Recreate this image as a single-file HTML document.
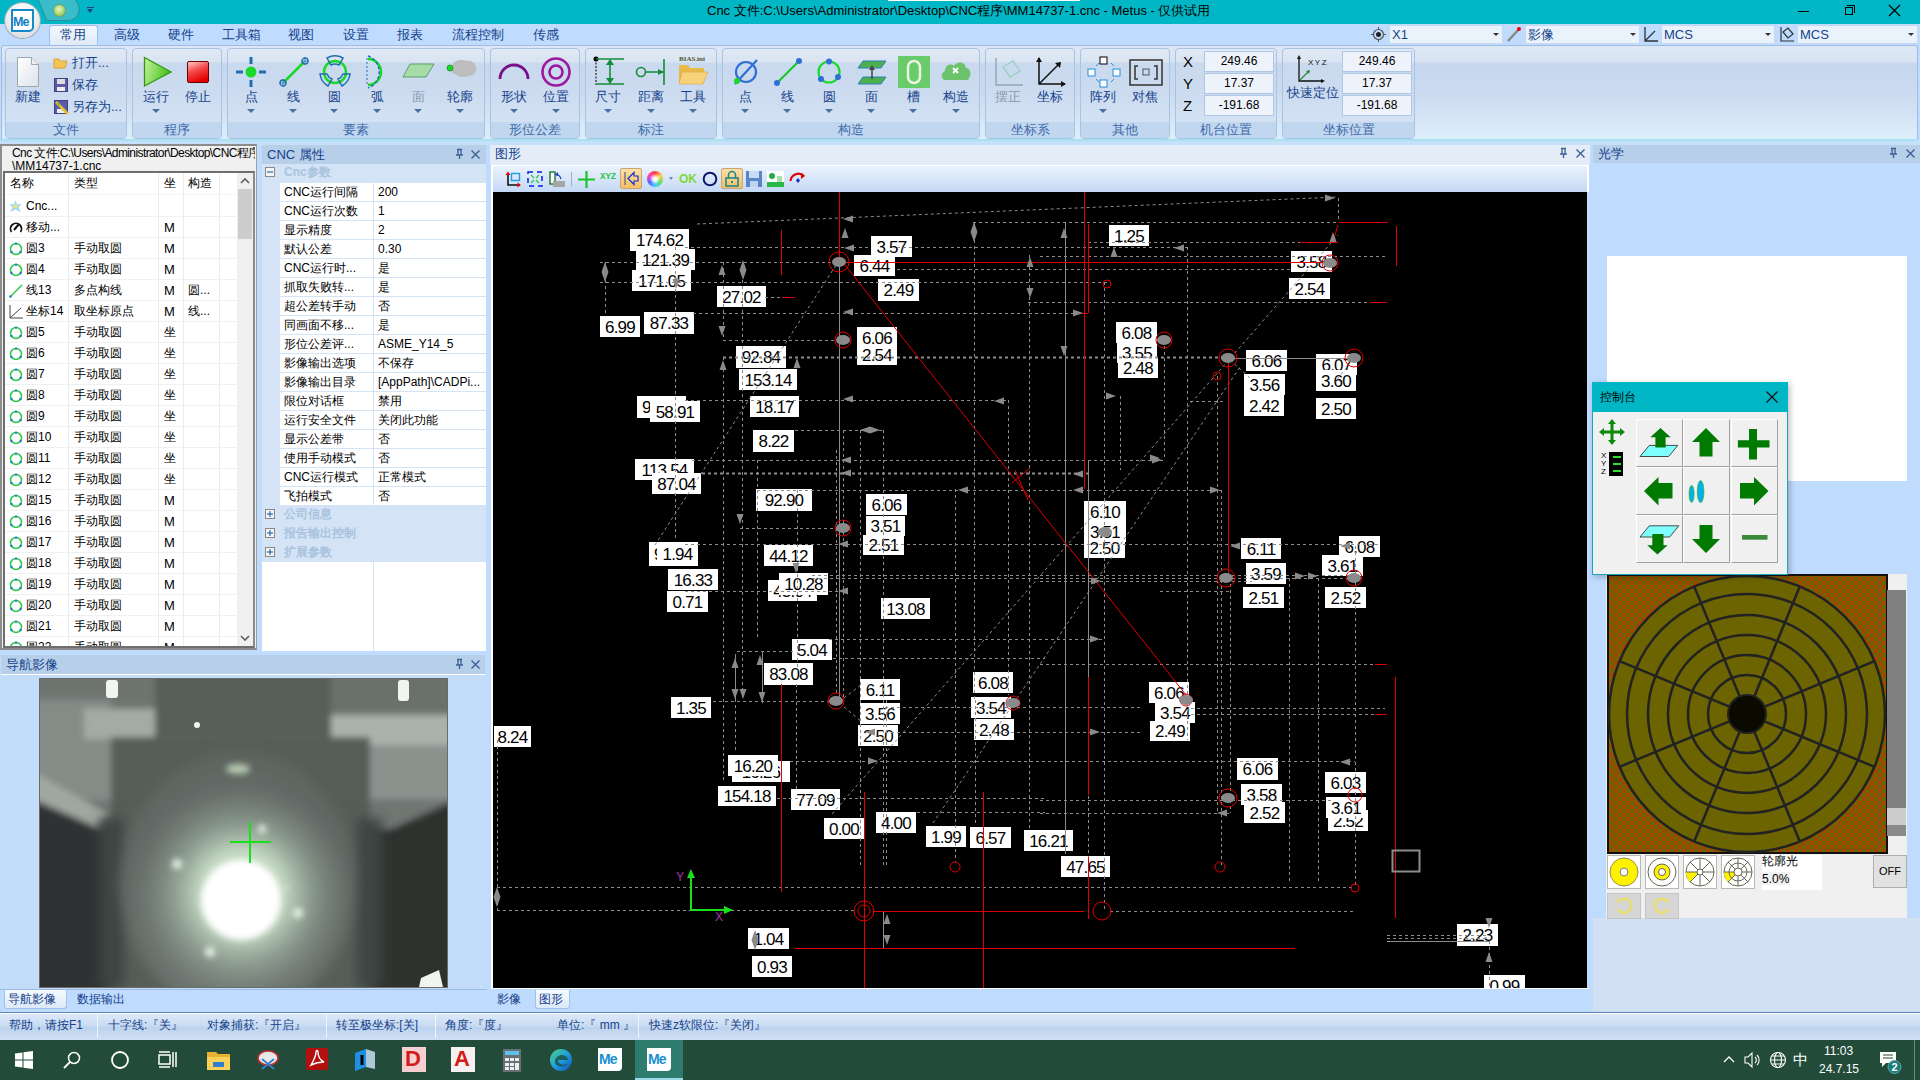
<!DOCTYPE html>
<html><head><meta charset="utf-8">
<style>
*{box-sizing:border-box;margin:0;padding:0}
html,body{width:1920px;height:1080px;overflow:hidden}
body{position:relative;background:#BFDBFE;font-family:"Liberation Sans",sans-serif;font-size:12px;color:#000}
.a{position:absolute}
.t{position:absolute;white-space:nowrap;line-height:1}
svg{position:absolute;overflow:visible}
.grp{position:absolute;top:48px;height:91px;border:1px solid #A9C3E3;border-radius:4px;background:linear-gradient(#E0E9F5 0,#DAE4F2 14%,#C9D9EE 16%,#CCDBEF 50%,#D6E6F6 100%)}
.grp .lbl{position:absolute;left:0;right:0;bottom:0;height:16px;background:#C1D6EF;text-align:center;color:#3E6AAA;font-size:13px;line-height:15px;border-radius:0 0 3px 3px}
.bt{position:absolute;font-size:13px;color:#15428B;white-space:nowrap;line-height:1;transform:translateX(-50%)}
.dd{position:absolute;width:0;height:0;border-left:4px solid transparent;border-right:4px solid transparent;border-top:4px solid #4B6FA6;transform:translateX(-50%)}
.ph{position:absolute;height:19px;background:#B8CFEA;color:#15428B;font-size:13px;line-height:19px;padding-left:5px;white-space:nowrap}
.lb{position:absolute;background:#fff;color:#000;font-size:17px;letter-spacing:-0.8px;line-height:21px;text-align:center;white-space:nowrap;overflow:hidden}
.row{position:absolute;height:21px;font-size:12px;line-height:21px;white-space:nowrap}
.pr{position:absolute;height:19px;font-size:12px;line-height:19px;white-space:nowrap}
</style></head>
<body>

<div class="a" style="left:0;top:0;width:1920px;height:24px;background:#01B7C5"></div>
<div class="a" style="left:888px;top:0;width:192px;height:1px;background:#fff"></div>
<div class="t" style="left:707px;top:4px;font-size:13px;color:#000;letter-spacing:0px">Cnc 文件:C:\Users\Administrator\Desktop\CNC程序\MM14737-1.cnc - Metus - 仅供试用</div>
<div class="a" style="left:1798px;top:11px;width:11px;height:1px;background:#000"></div>
<div class="a" style="left:1845px;top:7px;width:8px;height:8px;border:1px solid #000"></div><div class="a" style="left:1847px;top:5px;width:8px;height:8px;border-top:1px solid #000;border-right:1px solid #000"></div>
<svg style="left:1889px;top:5px" width="12" height="12"><path d="M0 0L11 11M11 0L0 11" stroke="#000" stroke-width="1.2"/></svg>
<svg style="left:36px;top:0" width="46" height="22"><path d="M2 -1C5 6 8 14 11 20.5H33A10.5 10.5 0 0 0 43 10C43 4 40 0 38 -1Z" fill="#3BBCC9" stroke="#2A8F9A" stroke-width="1"/></svg>
<div class="a" style="left:53px;top:4px;width:13px;height:13px;border-radius:50%;background:radial-gradient(circle at 45% 40%,#E4F5C6 0,#A8D66A 55%,#7FB04A 100%);border:1px solid #7d9a6a"></div>
<div class="a" style="left:87px;top:7px;width:7px;height:1px;background:#2A3F8A"></div><div class="a" style="left:87px;top:9px;width:0;height:0;border-left:3.5px solid transparent;border-right:3.5px solid transparent;border-top:4px solid #2A3F8A"></div>
<div class="a" style="left:0;top:24px;width:1920px;height:22px;background:#BFDBFE"></div>
<div class="a" style="left:49px;top:25px;width:49px;height:22px;background:linear-gradient(#F3F8FE,#DDE9F7);border:1px solid #9FC0E8;border-bottom:none;border-radius:3px 3px 0 0"></div>
<div class="t" style="left:73px;top:28px;font-size:13px;color:#15428B;transform:translateX(-50%)">常用</div>
<div class="t" style="left:127px;top:28px;font-size:13px;color:#15428B;transform:translateX(-50%)">高级</div>
<div class="t" style="left:181px;top:28px;font-size:13px;color:#15428B;transform:translateX(-50%)">硬件</div>
<div class="t" style="left:241px;top:28px;font-size:13px;color:#15428B;transform:translateX(-50%)">工具箱</div>
<div class="t" style="left:301px;top:28px;font-size:13px;color:#15428B;transform:translateX(-50%)">视图</div>
<div class="t" style="left:356px;top:28px;font-size:13px;color:#15428B;transform:translateX(-50%)">设置</div>
<div class="t" style="left:410px;top:28px;font-size:13px;color:#15428B;transform:translateX(-50%)">报表</div>
<div class="t" style="left:478px;top:28px;font-size:13px;color:#15428B;transform:translateX(-50%)">流程控制</div>
<div class="t" style="left:546px;top:28px;font-size:13px;color:#15428B;transform:translateX(-50%)">传感</div>
<div class="a" style="left:1389px;top:25px;width:114px;height:19px;background:#EAF2FC;border:1px solid #C6D9F0"></div><div class="t" style="left:1392px;top:28px;font-size:13px;color:#15428B">X1</div><div class="a" style="left:1493px;top:33px;width:0;height:0;border-left:3px solid transparent;border-right:3px solid transparent;border-top:3px solid #333"></div><svg style="left:1371px;top:27px" width="15" height="15"><circle cx="7.5" cy="7.5" r="5" fill="none" stroke="#555" stroke-width="1.2"/><circle cx="7.5" cy="7.5" r="2.5" fill="#222"/><path d="M7.5 0V3M7.5 12V15M0 7.5H3M12 7.5H15" stroke="#555"/></svg>
<div class="a" style="left:1525px;top:25px;width:115px;height:19px;background:#EAF2FC;border:1px solid #C6D9F0"></div><div class="t" style="left:1528px;top:28px;font-size:13px;color:#15428B">影像</div><div class="a" style="left:1630px;top:33px;width:0;height:0;border-left:3px solid transparent;border-right:3px solid transparent;border-top:3px solid #333"></div><svg style="left:1506px;top:26px" width="16" height="17"><path d="M2 15L13 3" stroke="#888" stroke-width="2.5"/><circle cx="13" cy="3" r="2" fill="#e00"/></svg>
<div class="a" style="left:1661px;top:25px;width:114px;height:19px;background:#EAF2FC;border:1px solid #C6D9F0"></div><div class="t" style="left:1664px;top:28px;font-size:13px;color:#15428B">MCS</div><div class="a" style="left:1765px;top:33px;width:0;height:0;border-left:3px solid transparent;border-right:3px solid transparent;border-top:3px solid #333"></div><svg style="left:1643px;top:26px" width="16" height="17"><path d="M2 1V15H15M2 15L12 5" stroke="#333" stroke-width="1.3" fill="none"/></svg>
<div class="a" style="left:1797px;top:25px;width:121px;height:19px;background:#EAF2FC;border:1px solid #C6D9F0"></div><div class="t" style="left:1800px;top:28px;font-size:13px;color:#15428B">MCS</div><div class="a" style="left:1908px;top:33px;width:0;height:0;border-left:3px solid transparent;border-right:3px solid transparent;border-top:3px solid #333"></div><svg style="left:1779px;top:26px" width="16" height="17"><path d="M2 1V15H15M4 6L9 2L14 8L9 12Z" stroke="#333" stroke-width="1.2" fill="none"/></svg>
<div class="a" style="left:5px;top:3px;width:35px;height:35px;border-radius:50%;background:radial-gradient(circle at 50% 35%,#ffffff 0,#f2f2f2 45%,#c9cfd6 100%);box-shadow:0 0 0 1px #9aa6b0"></div>
<div class="a" style="left:11px;top:9px;width:23px;height:23px;background:#fff;border:2px solid #1589C9;border-radius:1px 1px 5px 1px"></div>
<div class="t" style="left:13px;top:16px;font-size:12.5px;font-weight:bold;color:#1480C2;letter-spacing:-0.8px">Me</div>
<div class="a" style="left:1px;top:45px;width:1917px;height:96px;border:1px solid #9DBDE5;border-bottom:2px solid #A6E2F2;border-radius:3px;background:linear-gradient(#DEE8F5 0,#D8E3F2 17%,#C6D7EE 19%,#CBDAEF 50%,#DDEEFB 100%)"></div>
<div class="grp" style="left:5px;width:122px"><div class="lbl">文件</div></div>
<div class="grp" style="left:132px;width:90px"><div class="lbl">程序</div></div>
<div class="grp" style="left:227px;width:258px"><div class="lbl">要素</div></div>
<div class="grp" style="left:490px;width:90px"><div class="lbl">形位公差</div></div>
<div class="grp" style="left:585px;width:132px"><div class="lbl">标注</div></div>
<div class="grp" style="left:722px;width:258px"><div class="lbl">构造</div></div>
<div class="grp" style="left:985px;width:90px"><div class="lbl">坐标系</div></div>
<div class="grp" style="left:1080px;width:90px"><div class="lbl">其他</div></div>
<div class="grp" style="left:1175px;width:102px"><div class="lbl">机台位置</div></div>
<div class="grp" style="left:1282px;width:133px"><div class="lbl">坐标位置</div></div>
<svg style="left:17px;top:57px" width="22" height="30"><path d="M0.5 0.5H14.5L21.5 7.5V29.5H0.5Z" fill="url(#pg)" stroke="#9aa"/><path d="M14.5 0.5V7.5H21.5" fill="#eee" stroke="#9aa"/><defs><linearGradient id="pg" x1="0" y1="0" x2="1" y2="1"><stop offset="0" stop-color="#fff"/><stop offset="1" stop-color="#dde3ea"/></linearGradient></defs></svg>
<div class="bt" style="left:28px;top:90px;color:#15428B">新建</div>
<svg style="left:53px;top:56px" width="16" height="13"><path d="M1 3H6L7 5H14L12 12H1Z" fill="#F6C454" stroke="#D9A53A"/></svg>
<div class="t" style="left:72px;top:56px;font-size:13px;color:#15428B">打开...</div>
<svg style="left:54px;top:78px" width="14" height="14"><rect x="0.5" y="0.5" width="13" height="13" fill="#5B5BA8" stroke="#3f3f86"/><rect x="3" y="1" width="8" height="5" fill="#ddd"/><rect x="3" y="9" width="8" height="4" fill="#eee"/></svg>
<div class="t" style="left:72px;top:78px;font-size:13px;color:#15428B">保存</div>
<svg style="left:54px;top:100px" width="15" height="15"><rect x="0.5" y="0.5" width="13" height="13" fill="#5B5BA8" stroke="#3f3f86"/><rect x="3" y="9" width="8" height="4" fill="#eee"/><path d="M2 2L14 14" stroke="#E8C02A" stroke-width="2.5"/><path d="M3 3L6 6" stroke="#3a3"/></svg>
<div class="t" style="left:72px;top:100px;font-size:13px;color:#15428B">另存为...</div>
<svg style="left:143px;top:56px" width="30" height="32"><defs><linearGradient id="gr" x1="0" y1="0" x2="1" y2="0.3"><stop offset="0" stop-color="#C9F2A6"/><stop offset="1" stop-color="#45C21A"/></linearGradient></defs><path d="M1.5 1.5L28 16L1.5 30Z" fill="url(#gr)" stroke="#2E9A10" stroke-width="1.3"/></svg>
<div class="bt" style="left:156px;top:90px;color:#15428B">运行</div><div class="dd" style="left:156px;top:109px"></div>
<svg style="left:187px;top:61px" width="23" height="23"><defs><linearGradient id="rd" x1="0" y1="0" x2="0.4" y2="1"><stop offset="0" stop-color="#FFD2D2"/><stop offset="0.5" stop-color="#F24A4A"/><stop offset="1" stop-color="#E50000"/></linearGradient></defs><rect x="0.5" y="0.5" width="21" height="21" rx="1.5" fill="url(#rd)" stroke="#6a0000"/></svg>
<div class="bt" style="left:198px;top:90px;color:#15428B">停止</div>
<svg style="left:235px;top:56px" width="32" height="32"><circle cx="16" cy="16" r="5.5" fill="#19D92A"/><path d="M16 1V8M16 24V31M1 16H8M24 16H31" stroke="#1F6FB0" stroke-width="3"/></svg>
<div class="bt" style="left:251px;top:90px;color:#15428B">点</div><div class="dd" style="left:251px;top:109px"></div>
<svg style="left:279px;top:57px" width="30" height="30"><path d="M5 25L25 5" stroke="#19D92A" stroke-width="2.5"/><circle cx="4" cy="26" r="3" fill="none" stroke="#1F6FB0" stroke-width="1.3"/><circle cx="26" cy="4" r="3" fill="none" stroke="#1F6FB0" stroke-width="1.3"/><path d="M4 22V30M0 26H8M26 0V8M22 4H30" stroke="#1F6FB0" stroke-width="0.8"/></svg>
<div class="bt" style="left:293px;top:90px;color:#15428B">线</div><div class="dd" style="left:293px;top:109px"></div>
<svg style="left:318px;top:55px" width="34" height="34"><circle cx="17" cy="17" r="11" fill="none" stroke="#19D92A" stroke-width="2.5"/><path d="M9 3A16 16 0 0 1 25 3L21 10A9 9 0 0 0 13 10Z M2 19A16 16 0 0 0 10 31L14 24A9 9 0 0 1 9 19Z M32 19A16 16 0 0 1 24 31L20 24A9 9 0 0 0 25 19Z" fill="none" stroke="#1F6FB0" stroke-width="1.5"/></svg>
<div class="bt" style="left:334px;top:90px;color:#15428B">圆</div><div class="dd" style="left:334px;top:109px"></div>
<svg style="left:366px;top:56px" width="22" height="32"><path d="M2 3A13 13 0 0 1 2 29" fill="none" stroke="#19D92A" stroke-width="2.5"/><path d="M2 0A17 17 0 0 1 2 32" fill="none" stroke="#1F6FB0" stroke-width="1.5" stroke-dasharray="3 2"/><path d="M1 2V30" stroke="#1F6FB0" stroke-width="1" stroke-dasharray="2 2"/></svg>
<div class="bt" style="left:377px;top:90px;color:#15428B">弧</div><div class="dd" style="left:377px;top:109px"></div>
<svg style="left:402px;top:63px" width="33" height="15"><path d="M8 1H32L24 14H1Z" fill="#A6DDA6" stroke="#5F9F6F"/></svg>
<div class="bt" style="left:418px;top:90px;color:#8A9AB0">面</div><div class="dd" style="left:418px;top:109px"></div>
<svg style="left:445px;top:59px" width="32" height="20"><path d="M8 5C10 1 18 0 22 2C27 1 31 5 31 9C32 13 29 17 24 17C19 19 13 18 10 15C6 14 4 10 8 5Z" fill="#BDBDBD"/><circle cx="5" cy="9" r="3" fill="#19D92A" stroke="#0a8a1a" stroke-width="0.7"/></svg>
<div class="bt" style="left:460px;top:90px;color:#15428B">轮廓</div><div class="dd" style="left:460px;top:109px"></div>
<svg style="left:498px;top:60px" width="32" height="20"><path d="M2 19A14 14 0 0 1 30 19" fill="none" stroke="#7A0F8A" stroke-width="2.8"/></svg>
<div class="bt" style="left:514px;top:90px;color:#15428B">形状</div><div class="dd" style="left:514px;top:109px"></div>
<svg style="left:540px;top:56px" width="32" height="32"><circle cx="16" cy="16" r="13.5" fill="none" stroke="#9A199E" stroke-width="2.6"/><circle cx="16" cy="16" r="6.5" fill="none" stroke="#9A199E" stroke-width="2.6"/></svg>
<div class="bt" style="left:556px;top:90px;color:#15428B">位置</div><div class="dd" style="left:556px;top:109px"></div>
<svg style="left:592px;top:55px" width="34" height="34"><circle cx="4" cy="4" r="2.5" fill="#000"/><path d="M4 4V30" stroke="#000" stroke-dasharray="2 1.5"/><path d="M4 4H32M4 29H32M18 5V28" stroke="#148C3A" stroke-width="1.6"/><path d="M14 10L18 4L22 10ZM14 23L18 29L22 23Z" fill="#148C3A"/></svg>
<div class="bt" style="left:608px;top:90px;color:#15428B">尺寸</div><div class="dd" style="left:608px;top:109px"></div>
<svg style="left:636px;top:57px" width="32" height="30"><circle cx="5" cy="15" r="4.5" fill="none" stroke="#148C3A" stroke-width="1.6"/><path d="M10 15H28M28 2V28" stroke="#148C3A" stroke-width="1.6"/><path d="M22 12L28 15L22 18Z" fill="#148C3A"/></svg>
<div class="bt" style="left:651px;top:90px;color:#15428B">距离</div><div class="dd" style="left:651px;top:109px"></div>
<div class="t" style="left:679px;top:56px;font-size:7px;font-weight:bold;color:#4a5a2a;font-family:'Liberation Serif',serif">BIAS.ini</div>
<svg style="left:678px;top:63px" width="30" height="22"><path d="M1 2H10L12 5H26V20H1Z" fill="#E9B94A"/><path d="M4 9H30L25 21H1Z" fill="#F7D27A" stroke="#D9A53A" stroke-width="0.6"/></svg>
<div class="bt" style="left:693px;top:90px;color:#15428B">工具</div><div class="dd" style="left:693px;top:109px"></div>
<svg style="left:731px;top:57px" width="30" height="30"><circle cx="15" cy="15" r="10" fill="none" stroke="#2F6FD6" stroke-width="2.2"/><path d="M4 27L26 3" stroke="#2F6FD6" stroke-width="2.2"/><circle cx="6" cy="24" r="3" fill="#19D92A"/></svg>
<div class="bt" style="left:745px;top:90px;color:#15428B">点</div><div class="dd" style="left:745px;top:109px"></div>
<svg style="left:773px;top:57px" width="30" height="30"><path d="M4 26L26 4" stroke="#19C92A" stroke-width="2.2"/><circle cx="4" cy="26" r="3" fill="#2F6FD6"/><circle cx="26" cy="4" r="3" fill="#2F6FD6"/></svg>
<div class="bt" style="left:787px;top:90px;color:#15428B">线</div><div class="dd" style="left:787px;top:109px"></div>
<svg style="left:814px;top:57px" width="30" height="30"><circle cx="15" cy="15" r="10.5" fill="none" stroke="#19D92A" stroke-width="2.2"/><circle cx="15" cy="4.5" r="3" fill="#2F6FD6"/><circle cx="24" cy="20" r="3" fill="#2F6FD6"/><circle cx="7" cy="22" r="3" fill="#2F6FD6"/></svg>
<div class="bt" style="left:829px;top:90px;color:#15428B">圆</div><div class="dd" style="left:829px;top:109px"></div>
<svg style="left:856px;top:59px" width="32" height="28"><path d="M7 2H30L25 9H2Z" fill="#4CB04C" stroke="#2E7FBF"/><path d="M7 18H30L25 25H2Z" fill="#4CB04C" stroke="#2E7FBF"/><path d="M16 8V20" stroke="#444" stroke-width="1.5"/><path d="M13 11L16 6L19 11Z" fill="#444"/></svg>
<div class="bt" style="left:871px;top:90px;color:#15428B">面</div><div class="dd" style="left:871px;top:109px"></div>
<div class="a" style="left:898px;top:56px;width:32px;height:32px;background:#6ACB6A"></div><svg style="left:898px;top:56px" width="32" height="32"><rect x="10" y="5" width="12" height="22" rx="6" fill="none" stroke="#E6F5E6" stroke-width="2.5"/></svg>
<div class="bt" style="left:913px;top:90px;color:#15428B">槽</div><div class="dd" style="left:913px;top:109px"></div>
<svg style="left:940px;top:60px" width="32" height="22"><path d="M6 20C1 20 0 13 5 11C5 5 11 3 14 6C16 1 25 1 26 8C31 8 32 15 28 20Z" fill="#6CC36C"/><path d="M13 8L18 13M18 8L13 13" stroke="#fff" stroke-width="1.8"/></svg>
<div class="bt" style="left:956px;top:90px;color:#15428B">构造</div><div class="dd" style="left:956px;top:109px"></div>
<svg style="left:993px;top:57px" width="32" height="30"><path d="M3 1V28H30" stroke="#8FA5B8" stroke-width="1.4" fill="none"/><path d="M10 10L20 4L27 14L17 20Z" fill="none" stroke="#9FCFC0" stroke-width="1.4"/></svg>
<div class="bt" style="left:1008px;top:90px;color:#8A9AB0">摆正</div>
<svg style="left:1036px;top:57px" width="30" height="30"><path d="M3 1V27H29M3 27L24 6" stroke="#111" stroke-width="1.5" fill="none"/><path d="M0 5L3 0L6 5ZM25 24L30 27L25 30ZM19 6L25 5L24 11Z" fill="#111"/></svg>
<div class="bt" style="left:1050px;top:90px;color:#15428B">坐标</div>
<svg style="left:1087px;top:56px" width="34" height="32"><rect x="13" y="1" width="7" height="7" fill="#fff" stroke="#000"/><rect x="1" y="13" width="7" height="7" fill="#fff" stroke="#1E90E0"/><rect x="26" y="13" width="7" height="7" fill="#fff" stroke="#1E90E0"/><rect x="13" y="24" width="7" height="7" fill="#fff" stroke="#1E90E0"/><path d="M9 10L12 7M24 7L27 10M9 23L12 26M27 23L24 26" stroke="#1E90E0"/></svg>
<div class="bt" style="left:1103px;top:90px;color:#15428B">阵列</div><div class="dd" style="left:1103px;top:109px"></div>
<svg style="left:1129px;top:59px" width="34" height="27"><rect x="1" y="1" width="32" height="25" fill="none" stroke="#333" stroke-width="1.5"/><path d="M9 7H6V20H9M25 7H28V20H25" stroke="#333" stroke-width="1.5" fill="none"/><rect x="14" y="10" width="6" height="6" fill="none" stroke="#555"/></svg>
<div class="bt" style="left:1145px;top:90px;color:#15428B">对焦</div>
<div class="t" style="left:1183px;top:54px;font-size:15px;color:#000">X</div>
<div class="a" style="left:1204px;top:51px;width:70px;height:21px;background:#EEF3FB;border:1px solid #B0C7E4;font-size:12px;line-height:19px;text-align:center">249.46</div>
<div class="a" style="left:1342px;top:51px;width:70px;height:21px;background:#EEF3FB;border:1px solid #B0C7E4;font-size:12px;line-height:19px;text-align:center">249.46</div>
<div class="t" style="left:1183px;top:76px;font-size:15px;color:#000">Y</div>
<div class="a" style="left:1204px;top:73px;width:70px;height:21px;background:#EEF3FB;border:1px solid #B0C7E4;font-size:12px;line-height:19px;text-align:center">17.37</div>
<div class="a" style="left:1342px;top:73px;width:70px;height:21px;background:#EEF3FB;border:1px solid #B0C7E4;font-size:12px;line-height:19px;text-align:center">17.37</div>
<div class="t" style="left:1183px;top:98px;font-size:15px;color:#000">Z</div>
<div class="a" style="left:1204px;top:95px;width:70px;height:21px;background:#EEF3FB;border:1px solid #B0C7E4;font-size:12px;line-height:19px;text-align:center">-191.68</div>
<div class="a" style="left:1342px;top:95px;width:70px;height:21px;background:#EEF3FB;border:1px solid #B0C7E4;font-size:12px;line-height:19px;text-align:center">-191.68</div>
<svg style="left:1297px;top:55px" width="30" height="28"><path d="M2 2V26H26" stroke="#111" stroke-width="1.3" fill="none"/><path d="M0 4L2 0L4 4ZM24 24L28 26L24 28Z" fill="#111"/><path d="M3 25L12 16" stroke="#2A8A3A" stroke-width="1.3"/><path d="M9 16L13 15L12 19Z" fill="#2A8A3A"/></svg>
<div class="t" style="left:1308px;top:59px;font-size:8px;color:#111;letter-spacing:1.5px">XYZ</div>
<div class="t" style="left:1287px;top:86px;font-size:13px;color:#15428B">快速定位</div>
<div class="a" style="left:0;top:141px;width:1920px;height:4px;background:#C5E0F8"></div>
<div class="a" style="left:0;top:144px;width:257px;height:506px;background:#F0F0F0;border:2px solid #8C8C8C;border-right:1px solid #A0A0A0"></div>
<div class="t" style="left:12px;top:147px;font-size:12px;width:243px;overflow:hidden;letter-spacing:-0.6px">Cnc 文件:C:\Users\Administrator\Desktop\CNC程序</div>
<div class="t" style="left:12px;top:160px;font-size:12px">\MM14737-1.cnc</div>
<div class="a" style="left:3px;top:171px;width:252px;height:477px;background:#fff;border:2px solid #6E6E6E;border-right:2px solid #8A8A8A"></div>
<div class="a" style="left:68px;top:173px;width:1px;height:473px;background:#EBEBEB"></div>
<div class="a" style="left:158px;top:173px;width:1px;height:473px;background:#EBEBEB"></div>
<div class="a" style="left:183px;top:173px;width:1px;height:473px;background:#EBEBEB"></div>
<div class="a" style="left:219px;top:173px;width:1px;height:473px;background:#EBEBEB"></div>
<div class="a" style="left:5px;top:194px;width:232px;height:1px;background:#F4F4F4"></div>
<div class="t" style="left:10px;top:177px;font-size:12px">名称</div>
<div class="t" style="left:74px;top:177px;font-size:12px">类型</div>
<div class="t" style="left:164px;top:177px;font-size:12px">坐</div>
<div class="t" style="left:188px;top:177px;font-size:12px">构造</div>
<div class="a" style="left:237px;top:173px;width:16px;height:473px;background:#F0F0F0"></div>
<div class="a" style="left:238px;top:189px;width:14px;height:50px;background:#CDCDCD"></div>
<svg style="left:240px;top:177px" width="10" height="7"><path d="M1 6L5 2L9 6" stroke="#606060" stroke-width="1.6" fill="none"/></svg>
<svg style="left:240px;top:635px" width="10" height="7"><path d="M1 1L5 5L9 1" stroke="#606060" stroke-width="1.6" fill="none"/></svg>
<div class="a" style="left:0;top:0;width:237px;height:646px;overflow:hidden">
<div class="a" style="left:5px;top:216px;width:232px;height:1px;background:#F0F0F0"></div>
<svg style="left:9px;top:200px" width="13" height="13"><path d="M6.5 0L8 4.5L12.5 4L9.5 7.5L12 12L6.5 9.5L1 12L3.5 7.5L0.5 4L5 4.5Z" fill="#9FD8F0"/><circle cx="6.5" cy="6.5" r="2" fill="#F2E27A"/></svg>
<div class="row" style="left:26px;top:196px;width:70px;overflow:hidden;clip-path:inset(0 0 0px 0)">Cnc...</div>
<div class="a" style="left:5px;top:237px;width:232px;height:1px;background:#F0F0F0"></div>
<svg style="left:9px;top:221px" width="14" height="13"><path d="M2.5 11A5.5 5.5 0 1 1 11.5 11" fill="none" stroke="#111" stroke-width="1.8"/><path d="M5 9L10 3" stroke="#111" stroke-width="2"/></svg>
<div class="row" style="left:26px;top:217px;width:70px;overflow:hidden;clip-path:inset(0 0 0px 0)">移动...</div>
<div class="row" style="left:164px;top:217px;font-size:13px;clip-path:inset(0 0 0px 0)">M</div>
<div class="a" style="left:5px;top:258px;width:232px;height:1px;background:#F0F0F0"></div>
<svg style="left:9px;top:242px" width="14" height="14"><circle cx="7" cy="7" r="5.5" fill="none" stroke="#2BC84A" stroke-width="1.5"/><circle cx="7" cy="1.6" r="1.2" fill="#1E7FC8"/><circle cx="2.4" cy="10" r="1.2" fill="#1E7FC8"/><circle cx="11.6" cy="10" r="1.2" fill="#1E7FC8"/></svg>
<div class="row" style="left:26px;top:238px;width:70px;overflow:hidden;clip-path:inset(0 0 0px 0)">圆3</div>
<div class="row" style="left:74px;top:238px;clip-path:inset(0 0 0px 0)">手动取圆</div>
<div class="row" style="left:164px;top:238px;font-size:13px;clip-path:inset(0 0 0px 0)">M</div>
<div class="a" style="left:5px;top:279px;width:232px;height:1px;background:#F0F0F0"></div>
<svg style="left:9px;top:263px" width="14" height="14"><circle cx="7" cy="7" r="5.5" fill="none" stroke="#2BC84A" stroke-width="1.5"/><circle cx="7" cy="1.6" r="1.2" fill="#1E7FC8"/><circle cx="2.4" cy="10" r="1.2" fill="#1E7FC8"/><circle cx="11.6" cy="10" r="1.2" fill="#1E7FC8"/></svg>
<div class="row" style="left:26px;top:259px;width:70px;overflow:hidden;clip-path:inset(0 0 0px 0)">圆4</div>
<div class="row" style="left:74px;top:259px;clip-path:inset(0 0 0px 0)">手动取圆</div>
<div class="row" style="left:164px;top:259px;font-size:13px;clip-path:inset(0 0 0px 0)">M</div>
<div class="a" style="left:5px;top:300px;width:232px;height:1px;background:#F0F0F0"></div>
<svg style="left:9px;top:284px" width="14" height="14"><path d="M1 13L13 1" stroke="#2BC84A" stroke-width="1.5"/><circle cx="1.5" cy="12.5" r="1.3" fill="#1E7FC8"/></svg>
<div class="row" style="left:26px;top:280px;width:70px;overflow:hidden;clip-path:inset(0 0 0px 0)">线13</div>
<div class="row" style="left:74px;top:280px;clip-path:inset(0 0 0px 0)">多点构线</div>
<div class="row" style="left:164px;top:280px;font-size:13px;clip-path:inset(0 0 0px 0)">M</div>
<div class="row" style="left:188px;top:280px">圆...</div>
<div class="a" style="left:5px;top:321px;width:232px;height:1px;background:#F0F0F0"></div>
<svg style="left:9px;top:305px" width="14" height="14"><path d="M1 0V13H14M1 13L12 3" stroke="#444" stroke-width="1" fill="none"/></svg>
<div class="row" style="left:26px;top:301px;width:70px;overflow:hidden;clip-path:inset(0 0 0px 0)">坐标14</div>
<div class="row" style="left:74px;top:301px;clip-path:inset(0 0 0px 0)">取坐标原点</div>
<div class="row" style="left:164px;top:301px;font-size:13px;clip-path:inset(0 0 0px 0)">M</div>
<div class="row" style="left:188px;top:301px">线...</div>
<div class="a" style="left:5px;top:342px;width:232px;height:1px;background:#F0F0F0"></div>
<svg style="left:9px;top:326px" width="14" height="14"><circle cx="7" cy="7" r="5.5" fill="none" stroke="#2BC84A" stroke-width="1.5"/><circle cx="7" cy="1.6" r="1.2" fill="#1E7FC8"/><circle cx="2.4" cy="10" r="1.2" fill="#1E7FC8"/><circle cx="11.6" cy="10" r="1.2" fill="#1E7FC8"/></svg>
<div class="row" style="left:26px;top:322px;width:70px;overflow:hidden;clip-path:inset(0 0 0px 0)">圆5</div>
<div class="row" style="left:74px;top:322px;clip-path:inset(0 0 0px 0)">手动取圆</div>
<div class="row" style="left:164px;top:322px;font-size:12px;clip-path:inset(0 0 0px 0)">坐</div>
<div class="a" style="left:5px;top:363px;width:232px;height:1px;background:#F0F0F0"></div>
<svg style="left:9px;top:347px" width="14" height="14"><circle cx="7" cy="7" r="5.5" fill="none" stroke="#2BC84A" stroke-width="1.5"/><circle cx="7" cy="1.6" r="1.2" fill="#1E7FC8"/><circle cx="2.4" cy="10" r="1.2" fill="#1E7FC8"/><circle cx="11.6" cy="10" r="1.2" fill="#1E7FC8"/></svg>
<div class="row" style="left:26px;top:343px;width:70px;overflow:hidden;clip-path:inset(0 0 0px 0)">圆6</div>
<div class="row" style="left:74px;top:343px;clip-path:inset(0 0 0px 0)">手动取圆</div>
<div class="row" style="left:164px;top:343px;font-size:12px;clip-path:inset(0 0 0px 0)">坐</div>
<div class="a" style="left:5px;top:384px;width:232px;height:1px;background:#F0F0F0"></div>
<svg style="left:9px;top:368px" width="14" height="14"><circle cx="7" cy="7" r="5.5" fill="none" stroke="#2BC84A" stroke-width="1.5"/><circle cx="7" cy="1.6" r="1.2" fill="#1E7FC8"/><circle cx="2.4" cy="10" r="1.2" fill="#1E7FC8"/><circle cx="11.6" cy="10" r="1.2" fill="#1E7FC8"/></svg>
<div class="row" style="left:26px;top:364px;width:70px;overflow:hidden;clip-path:inset(0 0 0px 0)">圆7</div>
<div class="row" style="left:74px;top:364px;clip-path:inset(0 0 0px 0)">手动取圆</div>
<div class="row" style="left:164px;top:364px;font-size:12px;clip-path:inset(0 0 0px 0)">坐</div>
<div class="a" style="left:5px;top:405px;width:232px;height:1px;background:#F0F0F0"></div>
<svg style="left:9px;top:389px" width="14" height="14"><circle cx="7" cy="7" r="5.5" fill="none" stroke="#2BC84A" stroke-width="1.5"/><circle cx="7" cy="1.6" r="1.2" fill="#1E7FC8"/><circle cx="2.4" cy="10" r="1.2" fill="#1E7FC8"/><circle cx="11.6" cy="10" r="1.2" fill="#1E7FC8"/></svg>
<div class="row" style="left:26px;top:385px;width:70px;overflow:hidden;clip-path:inset(0 0 0px 0)">圆8</div>
<div class="row" style="left:74px;top:385px;clip-path:inset(0 0 0px 0)">手动取圆</div>
<div class="row" style="left:164px;top:385px;font-size:12px;clip-path:inset(0 0 0px 0)">坐</div>
<div class="a" style="left:5px;top:426px;width:232px;height:1px;background:#F0F0F0"></div>
<svg style="left:9px;top:410px" width="14" height="14"><circle cx="7" cy="7" r="5.5" fill="none" stroke="#2BC84A" stroke-width="1.5"/><circle cx="7" cy="1.6" r="1.2" fill="#1E7FC8"/><circle cx="2.4" cy="10" r="1.2" fill="#1E7FC8"/><circle cx="11.6" cy="10" r="1.2" fill="#1E7FC8"/></svg>
<div class="row" style="left:26px;top:406px;width:70px;overflow:hidden;clip-path:inset(0 0 0px 0)">圆9</div>
<div class="row" style="left:74px;top:406px;clip-path:inset(0 0 0px 0)">手动取圆</div>
<div class="row" style="left:164px;top:406px;font-size:12px;clip-path:inset(0 0 0px 0)">坐</div>
<div class="a" style="left:5px;top:447px;width:232px;height:1px;background:#F0F0F0"></div>
<svg style="left:9px;top:431px" width="14" height="14"><circle cx="7" cy="7" r="5.5" fill="none" stroke="#2BC84A" stroke-width="1.5"/><circle cx="7" cy="1.6" r="1.2" fill="#1E7FC8"/><circle cx="2.4" cy="10" r="1.2" fill="#1E7FC8"/><circle cx="11.6" cy="10" r="1.2" fill="#1E7FC8"/></svg>
<div class="row" style="left:26px;top:427px;width:70px;overflow:hidden;clip-path:inset(0 0 0px 0)">圆10</div>
<div class="row" style="left:74px;top:427px;clip-path:inset(0 0 0px 0)">手动取圆</div>
<div class="row" style="left:164px;top:427px;font-size:12px;clip-path:inset(0 0 0px 0)">坐</div>
<div class="a" style="left:5px;top:468px;width:232px;height:1px;background:#F0F0F0"></div>
<svg style="left:9px;top:452px" width="14" height="14"><circle cx="7" cy="7" r="5.5" fill="none" stroke="#2BC84A" stroke-width="1.5"/><circle cx="7" cy="1.6" r="1.2" fill="#1E7FC8"/><circle cx="2.4" cy="10" r="1.2" fill="#1E7FC8"/><circle cx="11.6" cy="10" r="1.2" fill="#1E7FC8"/></svg>
<div class="row" style="left:26px;top:448px;width:70px;overflow:hidden;clip-path:inset(0 0 0px 0)">圆11</div>
<div class="row" style="left:74px;top:448px;clip-path:inset(0 0 0px 0)">手动取圆</div>
<div class="row" style="left:164px;top:448px;font-size:12px;clip-path:inset(0 0 0px 0)">坐</div>
<div class="a" style="left:5px;top:489px;width:232px;height:1px;background:#F0F0F0"></div>
<svg style="left:9px;top:473px" width="14" height="14"><circle cx="7" cy="7" r="5.5" fill="none" stroke="#2BC84A" stroke-width="1.5"/><circle cx="7" cy="1.6" r="1.2" fill="#1E7FC8"/><circle cx="2.4" cy="10" r="1.2" fill="#1E7FC8"/><circle cx="11.6" cy="10" r="1.2" fill="#1E7FC8"/></svg>
<div class="row" style="left:26px;top:469px;width:70px;overflow:hidden;clip-path:inset(0 0 0px 0)">圆12</div>
<div class="row" style="left:74px;top:469px;clip-path:inset(0 0 0px 0)">手动取圆</div>
<div class="row" style="left:164px;top:469px;font-size:12px;clip-path:inset(0 0 0px 0)">坐</div>
<div class="a" style="left:5px;top:510px;width:232px;height:1px;background:#F0F0F0"></div>
<svg style="left:9px;top:494px" width="14" height="14"><circle cx="7" cy="7" r="5.5" fill="none" stroke="#2BC84A" stroke-width="1.5"/><circle cx="7" cy="1.6" r="1.2" fill="#1E7FC8"/><circle cx="2.4" cy="10" r="1.2" fill="#1E7FC8"/><circle cx="11.6" cy="10" r="1.2" fill="#1E7FC8"/></svg>
<div class="row" style="left:26px;top:490px;width:70px;overflow:hidden;clip-path:inset(0 0 0px 0)">圆15</div>
<div class="row" style="left:74px;top:490px;clip-path:inset(0 0 0px 0)">手动取圆</div>
<div class="row" style="left:164px;top:490px;font-size:13px;clip-path:inset(0 0 0px 0)">M</div>
<div class="a" style="left:5px;top:531px;width:232px;height:1px;background:#F0F0F0"></div>
<svg style="left:9px;top:515px" width="14" height="14"><circle cx="7" cy="7" r="5.5" fill="none" stroke="#2BC84A" stroke-width="1.5"/><circle cx="7" cy="1.6" r="1.2" fill="#1E7FC8"/><circle cx="2.4" cy="10" r="1.2" fill="#1E7FC8"/><circle cx="11.6" cy="10" r="1.2" fill="#1E7FC8"/></svg>
<div class="row" style="left:26px;top:511px;width:70px;overflow:hidden;clip-path:inset(0 0 0px 0)">圆16</div>
<div class="row" style="left:74px;top:511px;clip-path:inset(0 0 0px 0)">手动取圆</div>
<div class="row" style="left:164px;top:511px;font-size:13px;clip-path:inset(0 0 0px 0)">M</div>
<div class="a" style="left:5px;top:552px;width:232px;height:1px;background:#F0F0F0"></div>
<svg style="left:9px;top:536px" width="14" height="14"><circle cx="7" cy="7" r="5.5" fill="none" stroke="#2BC84A" stroke-width="1.5"/><circle cx="7" cy="1.6" r="1.2" fill="#1E7FC8"/><circle cx="2.4" cy="10" r="1.2" fill="#1E7FC8"/><circle cx="11.6" cy="10" r="1.2" fill="#1E7FC8"/></svg>
<div class="row" style="left:26px;top:532px;width:70px;overflow:hidden;clip-path:inset(0 0 0px 0)">圆17</div>
<div class="row" style="left:74px;top:532px;clip-path:inset(0 0 0px 0)">手动取圆</div>
<div class="row" style="left:164px;top:532px;font-size:13px;clip-path:inset(0 0 0px 0)">M</div>
<div class="a" style="left:5px;top:573px;width:232px;height:1px;background:#F0F0F0"></div>
<svg style="left:9px;top:557px" width="14" height="14"><circle cx="7" cy="7" r="5.5" fill="none" stroke="#2BC84A" stroke-width="1.5"/><circle cx="7" cy="1.6" r="1.2" fill="#1E7FC8"/><circle cx="2.4" cy="10" r="1.2" fill="#1E7FC8"/><circle cx="11.6" cy="10" r="1.2" fill="#1E7FC8"/></svg>
<div class="row" style="left:26px;top:553px;width:70px;overflow:hidden;clip-path:inset(0 0 0px 0)">圆18</div>
<div class="row" style="left:74px;top:553px;clip-path:inset(0 0 0px 0)">手动取圆</div>
<div class="row" style="left:164px;top:553px;font-size:13px;clip-path:inset(0 0 0px 0)">M</div>
<div class="a" style="left:5px;top:594px;width:232px;height:1px;background:#F0F0F0"></div>
<svg style="left:9px;top:578px" width="14" height="14"><circle cx="7" cy="7" r="5.5" fill="none" stroke="#2BC84A" stroke-width="1.5"/><circle cx="7" cy="1.6" r="1.2" fill="#1E7FC8"/><circle cx="2.4" cy="10" r="1.2" fill="#1E7FC8"/><circle cx="11.6" cy="10" r="1.2" fill="#1E7FC8"/></svg>
<div class="row" style="left:26px;top:574px;width:70px;overflow:hidden;clip-path:inset(0 0 0px 0)">圆19</div>
<div class="row" style="left:74px;top:574px;clip-path:inset(0 0 0px 0)">手动取圆</div>
<div class="row" style="left:164px;top:574px;font-size:13px;clip-path:inset(0 0 0px 0)">M</div>
<div class="a" style="left:5px;top:615px;width:232px;height:1px;background:#F0F0F0"></div>
<svg style="left:9px;top:599px" width="14" height="14"><circle cx="7" cy="7" r="5.5" fill="none" stroke="#2BC84A" stroke-width="1.5"/><circle cx="7" cy="1.6" r="1.2" fill="#1E7FC8"/><circle cx="2.4" cy="10" r="1.2" fill="#1E7FC8"/><circle cx="11.6" cy="10" r="1.2" fill="#1E7FC8"/></svg>
<div class="row" style="left:26px;top:595px;width:70px;overflow:hidden;clip-path:inset(0 0 0px 0)">圆20</div>
<div class="row" style="left:74px;top:595px;clip-path:inset(0 0 0px 0)">手动取圆</div>
<div class="row" style="left:164px;top:595px;font-size:13px;clip-path:inset(0 0 0px 0)">M</div>
<div class="a" style="left:5px;top:636px;width:232px;height:1px;background:#F0F0F0"></div>
<svg style="left:9px;top:620px" width="14" height="14"><circle cx="7" cy="7" r="5.5" fill="none" stroke="#2BC84A" stroke-width="1.5"/><circle cx="7" cy="1.6" r="1.2" fill="#1E7FC8"/><circle cx="2.4" cy="10" r="1.2" fill="#1E7FC8"/><circle cx="11.6" cy="10" r="1.2" fill="#1E7FC8"/></svg>
<div class="row" style="left:26px;top:616px;width:70px;overflow:hidden;clip-path:inset(0 0 0px 0)">圆21</div>
<div class="row" style="left:74px;top:616px;clip-path:inset(0 0 0px 0)">手动取圆</div>
<div class="row" style="left:164px;top:616px;font-size:13px;clip-path:inset(0 0 0px 0)">M</div>
<div class="a" style="left:5px;top:657px;width:232px;height:1px;background:#F0F0F0"></div>
<svg style="left:9px;top:641px" width="14" height="14"><circle cx="7" cy="7" r="5.5" fill="none" stroke="#2BC84A" stroke-width="1.5"/><circle cx="7" cy="1.6" r="1.2" fill="#1E7FC8"/><circle cx="2.4" cy="10" r="1.2" fill="#1E7FC8"/><circle cx="11.6" cy="10" r="1.2" fill="#1E7FC8"/></svg>
<div class="row" style="left:26px;top:637px;width:70px;overflow:hidden;clip-path:inset(0 0 12px 0)">圆22</div>
<div class="row" style="left:74px;top:637px;clip-path:inset(0 0 12px 0)">手动取圆</div>
<div class="row" style="left:164px;top:637px;font-size:13px;clip-path:inset(0 0 12px 0)">M</div>
</div>
<div class="a" style="left:262px;top:145px;width:224px;height:506px;background:#D4E3F5"></div>
<div class="ph" style="left:262px;top:145px;width:224px">CNC 属性</div>
<svg style="left:455px;top:149px" width="9" height="10"><path d="M2 0.5H7M3 0.5V6M6 0.5V6M1 6H8M4.5 6V10" stroke="#3A5F95" stroke-width="1.3" fill="none"/></svg><svg style="left:471px;top:150px" width="9" height="9"><path d="M0.5 0.5L8.5 8.5M8.5 0.5L0.5 8.5" stroke="#3A5F95" stroke-width="1.4"/></svg>
<svg style="left:265px;top:167px" width="10" height="10"><rect x="0.5" y="0.5" width="9" height="9" fill="#F4F4F4" stroke="#888"/><path d="M2 5H8" stroke="#1050A0"/></svg>
<div class="t" style="left:284px;top:166px;font-size:12px;font-weight:bold;color:#A9C3DE">Cnc参数</div>
<div class="a" style="left:280px;top:183px;width:93px;height:18px;background:#fff"></div>
<div class="a" style="left:374px;top:183px;width:112px;height:18px;background:#fff"></div>
<div class="pr" style="left:284px;top:183px">CNC运行间隔</div>
<div class="pr" style="left:378px;top:183px;width:106px;overflow:hidden">200</div>
<div class="a" style="left:280px;top:202px;width:93px;height:18px;background:#fff"></div>
<div class="a" style="left:374px;top:202px;width:112px;height:18px;background:#fff"></div>
<div class="pr" style="left:284px;top:202px">CNC运行次数</div>
<div class="pr" style="left:378px;top:202px;width:106px;overflow:hidden">1</div>
<div class="a" style="left:280px;top:221px;width:93px;height:18px;background:#fff"></div>
<div class="a" style="left:374px;top:221px;width:112px;height:18px;background:#fff"></div>
<div class="pr" style="left:284px;top:221px">显示精度</div>
<div class="pr" style="left:378px;top:221px;width:106px;overflow:hidden">2</div>
<div class="a" style="left:280px;top:240px;width:93px;height:18px;background:#fff"></div>
<div class="a" style="left:374px;top:240px;width:112px;height:18px;background:#fff"></div>
<div class="pr" style="left:284px;top:240px">默认公差</div>
<div class="pr" style="left:378px;top:240px;width:106px;overflow:hidden">0.30</div>
<div class="a" style="left:280px;top:259px;width:93px;height:18px;background:#fff"></div>
<div class="a" style="left:374px;top:259px;width:112px;height:18px;background:#fff"></div>
<div class="pr" style="left:284px;top:259px">CNC运行时...</div>
<div class="pr" style="left:378px;top:259px;width:106px;overflow:hidden">是</div>
<div class="a" style="left:280px;top:278px;width:93px;height:18px;background:#fff"></div>
<div class="a" style="left:374px;top:278px;width:112px;height:18px;background:#fff"></div>
<div class="pr" style="left:284px;top:278px">抓取失败转...</div>
<div class="pr" style="left:378px;top:278px;width:106px;overflow:hidden">是</div>
<div class="a" style="left:280px;top:297px;width:93px;height:18px;background:#fff"></div>
<div class="a" style="left:374px;top:297px;width:112px;height:18px;background:#fff"></div>
<div class="pr" style="left:284px;top:297px">超公差转手动</div>
<div class="pr" style="left:378px;top:297px;width:106px;overflow:hidden">否</div>
<div class="a" style="left:280px;top:316px;width:93px;height:18px;background:#fff"></div>
<div class="a" style="left:374px;top:316px;width:112px;height:18px;background:#fff"></div>
<div class="pr" style="left:284px;top:316px">同画面不移...</div>
<div class="pr" style="left:378px;top:316px;width:106px;overflow:hidden">是</div>
<div class="a" style="left:280px;top:335px;width:93px;height:18px;background:#fff"></div>
<div class="a" style="left:374px;top:335px;width:112px;height:18px;background:#fff"></div>
<div class="pr" style="left:284px;top:335px">形位公差评...</div>
<div class="pr" style="left:378px;top:335px;width:106px;overflow:hidden">ASME_Y14_5</div>
<div class="a" style="left:280px;top:354px;width:93px;height:18px;background:#fff"></div>
<div class="a" style="left:374px;top:354px;width:112px;height:18px;background:#fff"></div>
<div class="pr" style="left:284px;top:354px">影像输出选项</div>
<div class="pr" style="left:378px;top:354px;width:106px;overflow:hidden">不保存</div>
<div class="a" style="left:280px;top:373px;width:93px;height:18px;background:#fff"></div>
<div class="a" style="left:374px;top:373px;width:112px;height:18px;background:#fff"></div>
<div class="pr" style="left:284px;top:373px">影像输出目录</div>
<div class="pr" style="left:378px;top:373px;width:106px;overflow:hidden">[AppPath]\CADPi...</div>
<div class="a" style="left:280px;top:392px;width:93px;height:18px;background:#fff"></div>
<div class="a" style="left:374px;top:392px;width:112px;height:18px;background:#fff"></div>
<div class="pr" style="left:284px;top:392px">限位对话框</div>
<div class="pr" style="left:378px;top:392px;width:106px;overflow:hidden">禁用</div>
<div class="a" style="left:280px;top:411px;width:93px;height:18px;background:#fff"></div>
<div class="a" style="left:374px;top:411px;width:112px;height:18px;background:#fff"></div>
<div class="pr" style="left:284px;top:411px">运行安全文件</div>
<div class="pr" style="left:378px;top:411px;width:106px;overflow:hidden">关闭此功能</div>
<div class="a" style="left:280px;top:430px;width:93px;height:18px;background:#fff"></div>
<div class="a" style="left:374px;top:430px;width:112px;height:18px;background:#fff"></div>
<div class="pr" style="left:284px;top:430px">显示公差带</div>
<div class="pr" style="left:378px;top:430px;width:106px;overflow:hidden">否</div>
<div class="a" style="left:280px;top:449px;width:93px;height:18px;background:#fff"></div>
<div class="a" style="left:374px;top:449px;width:112px;height:18px;background:#fff"></div>
<div class="pr" style="left:284px;top:449px">使用手动模式</div>
<div class="pr" style="left:378px;top:449px;width:106px;overflow:hidden">否</div>
<div class="a" style="left:280px;top:468px;width:93px;height:18px;background:#fff"></div>
<div class="a" style="left:374px;top:468px;width:112px;height:18px;background:#fff"></div>
<div class="pr" style="left:284px;top:468px">CNC运行模式</div>
<div class="pr" style="left:378px;top:468px;width:106px;overflow:hidden">正常模式</div>
<div class="a" style="left:280px;top:487px;width:93px;height:18px;background:#fff"></div>
<div class="a" style="left:374px;top:487px;width:112px;height:18px;background:#fff"></div>
<div class="pr" style="left:284px;top:487px">飞拍模式</div>
<div class="pr" style="left:378px;top:487px;width:106px;overflow:hidden">否</div>
<svg style="left:265px;top:509px" width="10" height="10"><rect x="0.5" y="0.5" width="9" height="9" fill="#F4F4F4" stroke="#888"/><path d="M2 5H8M5 2V8" stroke="#1050A0"/></svg>
<div class="t" style="left:284px;top:508px;font-size:12px;font-weight:bold;color:#A9C3DE">公司信息</div>
<svg style="left:265px;top:528px" width="10" height="10"><rect x="0.5" y="0.5" width="9" height="9" fill="#F4F4F4" stroke="#888"/><path d="M2 5H8M5 2V8" stroke="#1050A0"/></svg>
<div class="t" style="left:284px;top:527px;font-size:12px;font-weight:bold;color:#A9C3DE">报告输出控制</div>
<svg style="left:265px;top:547px" width="10" height="10"><rect x="0.5" y="0.5" width="9" height="9" fill="#F4F4F4" stroke="#888"/><path d="M2 5H8M5 2V8" stroke="#1050A0"/></svg>
<div class="t" style="left:284px;top:546px;font-size:12px;font-weight:bold;color:#A9C3DE">扩展参数</div>
<div class="a" style="left:262px;top:562px;width:224px;height:89px;background:#fff"></div>
<div class="a" style="left:373px;top:562px;width:1px;height:89px;background:#D4E3F5"></div>
<div class="a" style="left:0;top:652px;width:487px;height:338px;background:#BFDBFE"></div>
<div class="ph" style="left:1px;top:655px;width:484px;height:19px">导航影像</div>
<svg style="left:455px;top:659px" width="9" height="10"><path d="M2 0.5H7M3 0.5V6M6 0.5V6M1 6H8M4.5 6V10" stroke="#3A5F95" stroke-width="1.3" fill="none"/></svg><svg style="left:471px;top:660px" width="9" height="9"><path d="M0.5 0.5L8.5 8.5M8.5 0.5L0.5 8.5" stroke="#3A5F95" stroke-width="1.4"/></svg>
<div class="a" style="left:1px;top:674px;width:484px;height:315px;background:#C2DCFA;border-top:1px solid #fff"></div>
<div class="a" style="left:0;top:989px;width:487px;height:22px;background:#BFDBFE;border-top:1px solid #9DBAE0"></div>
<div class="a" style="left:4px;top:990px;width:63px;height:19px;background:linear-gradient(#F6FAFF,#DCE9F8);border:1px solid #9FC0E8;border-top:none;border-radius:0 0 3px 3px"></div>
<div class="t" style="left:8px;top:993px;font-size:12px;color:#15428B">导航影像</div>
<div class="t" style="left:77px;top:993px;font-size:12px;color:#15428B">数据输出</div>
<div class="a" style="left:487px;top:145px;width:1106px;height:866px;background:#BFDBFE"></div>
<div class="a" style="left:490px;top:145px;width:1100px;height:20px;background:#E3ECF7"></div>
<div class="t" style="left:495px;top:147px;font-size:13px;color:#15428B">图形</div>
<svg style="left:1559px;top:148px" width="9" height="10"><path d="M2 0.5H7M3 0.5V6M6 0.5V6M1 6H8M4.5 6V10" stroke="#3A5F95" stroke-width="1.3" fill="none"/></svg><svg style="left:1576px;top:149px" width="9" height="9"><path d="M0.5 0.5L8.5 8.5M8.5 0.5L0.5 8.5" stroke="#3A5F95" stroke-width="1.4"/></svg>
<div class="a" style="left:491px;top:165px;width:1098px;height:825px;background:#fff"></div>
<div class="a" style="left:493px;top:166px;width:1094px;height:26px;background:linear-gradient(#EAF2FD 0,#DCE8F9 40%,#C4D9F5 100%)"></div>
<svg style="left:505px;top:171px" width="17" height="16"><path d="M3 2V14H15" stroke="#111" stroke-width="1.6" fill="none"/><path d="M0.5 4L3 0.5L5.5 4ZM12.5 11.5L16 14L12.5 16.5Z" fill="#E00"/><rect x="6.5" y="2.5" width="8" height="7" fill="none" stroke="#19A0E8" stroke-width="1.4"/></svg>
<svg style="left:527px;top:171px" width="16" height="16"><rect x="1" y="1" width="14" height="14" fill="none" stroke="#0020E0" stroke-width="1.5" stroke-dasharray="5 4"/><path d="M4 4L7 7M12 4L9 7M4 12L7 9M12 12L9 9" stroke="#2BC84A" stroke-width="1.3"/></svg>
<svg style="left:549px;top:171px" width="17" height="17"><rect x="1" y="1" width="5" height="12" fill="#fff" stroke="#0A6A1A" stroke-width="1.3"/><rect x="4" y="10" width="12" height="6" fill="#A6A6A6"/><path d="M7 3A7 7 0 0 1 12 8" stroke="#1030D0" stroke-width="1.2" fill="none"/><path d="M6 4L9 1L9 5Z" fill="#1030D0"/></svg>
<div class="a" style="left:571px;top:172px;width:1px;height:14px;background:#9AB0CC"></div>
<svg style="left:578px;top:171px" width="17" height="17"><path d="M8.5 0V17M0 8.5H17" stroke="#19C32A" stroke-width="2.2"/></svg>
<div class="t" style="left:600px;top:173px;font-size:9px;font-weight:bold;color:#2BC84A;font-family:'Liberation Mono',monospace">XYZ</div>
<div class="a" style="left:620px;top:168px;width:22px;height:21px;background:linear-gradient(#FCDFA8,#F7BE66);border:1px solid #C8A670;border-radius:2px"></div>
<svg style="left:624px;top:171px" width="15" height="15"><path d="M1 1V14" stroke="#777" stroke-width="1.5"/><path d="M4 7.5L10 1.5V5H14V10H10V13.5Z" fill="none" stroke="#1030D0" stroke-width="1.2"/></svg>
<div class="a" style="left:647px;top:171px;width:16px;height:16px;border-radius:50%;background:conic-gradient(#ff4040,#ffd040,#60e060,#40d0ff,#6060ff,#ff40c0,#ff4040)"></div><div class="a" style="left:650px;top:174px;width:10px;height:10px;border-radius:50%;background:radial-gradient(#fff 20%,rgba(255,255,255,0) 80%)"></div>
<div class="a" style="left:669px;top:177px;width:0;height:0;border-left:2.5px solid transparent;border-right:2.5px solid transparent;border-top:3px solid #6A86B0"></div>
<div class="t" style="left:679px;top:173px;font-size:12px;font-weight:bold;color:#7ED83A">OK</div>
<svg style="left:702px;top:171px" width="16" height="16"><circle cx="8" cy="8" r="6.3" fill="none" stroke="#101870" stroke-width="2"/></svg>
<div class="a" style="left:721px;top:168px;width:22px;height:21px;background:linear-gradient(#FCDFA8,#F7BE66);border:1px solid #C8A670;border-radius:2px"></div>
<svg style="left:725px;top:170px" width="14" height="17"><path d="M3.5 8V5A3.5 3.5 0 0 1 10.5 5V8" fill="none" stroke="#1C8A8A" stroke-width="1.6"/><rect x="1" y="8" width="12" height="8" fill="none" stroke="#1C8A8A" stroke-width="1.6"/><rect x="6" y="11" width="2" height="2" fill="#1C8A8A"/></svg>
<svg style="left:746px;top:171px" width="16" height="16"><rect x="0" y="0" width="16" height="16" fill="#5A86C8"/><rect x="3" y="0" width="10" height="7" fill="#C8DCF4"/><rect x="4" y="10" width="8" height="6" fill="#BFD3EE"/></svg>
<svg style="left:767px;top:171px" width="17" height="16"><rect x="0" y="0" width="17" height="16" fill="#fff"/><rect x="0" y="11" width="17" height="5" fill="#2BB84A"/><circle cx="5" cy="5" r="3" fill="#2BA84A"/><path d="M10 5H15V11H10Z" fill="#A8E0A8"/></svg>
<svg style="left:789px;top:171px" width="17" height="14"><path d="M1.5 10A8 8 0 0 1 15 5" fill="none" stroke="#E00000" stroke-width="2.2"/><path d="M12 2L16 5L12 8Z" fill="#E00000"/><path d="M9 7L11 9.5L9 12L7 9.5Z" fill="#1030D0"/></svg>
<div class="a" style="left:493px;top:192px;width:1094px;height:796px;background:#000;overflow:hidden">
<div class="t" style="left:183px;top:679px;font-size:12px;color:#B030B0">Y</div>
<div class="t" style="left:222px;top:719px;font-size:12px;color:#B030B0">X</div>
<div class="lb" style="left:137px;top:37px;width:59px;height:22px;line-height:24px;">174.62</div>
<div class="lb" style="left:143px;top:57px;width:59px;height:21px;line-height:23px;">121.39</div>
<div class="lb" style="left:139px;top:78px;width:59px;height:21px;line-height:23px;">171.05</div>
<div class="lb" style="left:224px;top:94px;width:49px;height:21px;line-height:23px;">27.02</div>
<div class="lb" style="left:107px;top:124px;width:40px;height:21px;line-height:23px;">6.99</div>
<div class="lb" style="left:151px;top:120px;width:50px;height:22px;line-height:24px;">87.33</div>
<div class="lb" style="left:378px;top:44px;width:41px;height:21px;line-height:23px;">3.57</div>
<div class="lb" style="left:361px;top:63px;width:41px;height:21px;line-height:23px;">6.44</div>
<div class="lb" style="left:385px;top:87px;width:41px;height:22px;line-height:24px;">2.49</div>
<div class="lb" style="left:364px;top:135px;width:40px;height:21px;line-height:23px;">6.06</div>
<div class="lb" style="left:364px;top:152px;width:40px;height:21px;line-height:23px;">2.54</div>
<div class="lb" style="left:243px;top:154px;width:50px;height:22px;line-height:24px;">92.84</div>
<div class="lb" style="left:246px;top:177px;width:58px;height:21px;line-height:23px;">153.14</div>
<div class="lb" style="left:144px;top:204px;width:49px;height:22px;line-height:24px;text-align:left;padding-left:5px;">9</div>
<div class="lb" style="left:157px;top:209px;width:50px;height:21px;line-height:23px;">58.91</div>
<div class="lb" style="left:257px;top:204px;width:49px;height:21px;line-height:23px;">18.17</div>
<div class="lb" style="left:260px;top:238px;width:41px;height:22px;line-height:24px;">8.22</div>
<div class="lb" style="left:142px;top:267px;width:59px;height:21px;line-height:23px;">113.54</div>
<div class="lb" style="left:159px;top:281px;width:49px;height:21px;line-height:23px;">87.04</div>
<div class="lb" style="left:263px;top:297px;width:56px;height:22px;line-height:24px;">92.90</div>
<div class="lb" style="left:373px;top:302px;width:41px;height:21px;line-height:23px;">6.06</div>
<div class="lb" style="left:373px;top:324px;width:39px;height:20px;line-height:22px;">3.51</div>
<div class="lb" style="left:370px;top:343px;width:41px;height:20px;line-height:22px;">2.51</div>
<div class="lb" style="left:156px;top:350px;width:49px;height:24px;line-height:26px;text-align:left;padding-left:5px;">9</div>
<div class="lb" style="left:164px;top:350px;width:41px;height:24px;line-height:26px;">1.94</div>
<div class="lb" style="left:271px;top:353px;width:49px;height:21px;line-height:23px;">44.12</div>
<div class="lb" style="left:175px;top:377px;width:50px;height:21px;line-height:23px;">16.33</div>
<div class="lb" style="left:275px;top:388px;width:49px;height:21px;line-height:23px;">43.04</div>
<div class="lb" style="left:286px;top:381px;width:49px;height:22px;line-height:24px;">10.28</div>
<div class="lb" style="left:174px;top:399px;width:41px;height:21px;line-height:23px;">0.71</div>
<div class="lb" style="left:388px;top:406px;width:49px;height:21px;line-height:23px;">13.08</div>
<div class="lb" style="left:299px;top:447px;width:40px;height:21px;line-height:23px;">5.04</div>
<div class="lb" style="left:271px;top:471px;width:49px;height:22px;line-height:24px;">83.08</div>
<div class="lb" style="left:367px;top:487px;width:40px;height:21px;line-height:23px;">6.11</div>
<div class="lb" style="left:367px;top:511px;width:40px;height:21px;line-height:23px;">3.56</div>
<div class="lb" style="left:365px;top:533px;width:40px;height:21px;line-height:23px;">2.50</div>
<div class="lb" style="left:480px;top:480px;width:40px;height:21px;line-height:23px;">6.08</div>
<div class="lb" style="left:478px;top:505px;width:40px;height:21px;line-height:23px;">3.54</div>
<div class="lb" style="left:481px;top:527px;width:40px;height:21px;line-height:23px;">2.48</div>
<div class="lb" style="left:178px;top:505px;width:40px;height:21px;line-height:23px;">1.35</div>
<div class="lb" style="left:1px;top:534px;width:37px;height:21px;line-height:23px;">8.24</div>
<div class="lb" style="left:239px;top:569px;width:58px;height:21px;line-height:23px;">16.26</div>
<div class="lb" style="left:235px;top:563px;width:50px;height:21px;line-height:23px;">16.20</div>
<div class="lb" style="left:225px;top:594px;width:58px;height:20px;line-height:22px;">154.18</div>
<div class="lb" style="left:298px;top:597px;width:49px;height:21px;line-height:23px;">77.09</div>
<div class="lb" style="left:331px;top:626px;width:40px;height:21px;line-height:23px;">0.00</div>
<div class="lb" style="left:383px;top:620px;width:40px;height:21px;line-height:23px;">4.00</div>
<div class="lb" style="left:433px;top:634px;width:40px;height:21px;line-height:23px;">1.99</div>
<div class="lb" style="left:477px;top:635px;width:41px;height:21px;line-height:23px;">6.57</div>
<div class="lb" style="left:531px;top:638px;width:49px;height:21px;line-height:23px;">16.21</div>
<div class="lb" style="left:255px;top:736px;width:41px;height:21px;line-height:23px;">1.04</div>
<div class="lb" style="left:259px;top:764px;width:40px;height:21px;line-height:23px;">0.93</div>
<div class="lb" style="left:616px;top:33px;width:40px;height:21px;line-height:23px;">1.25</div>
<div class="lb" style="left:798px;top:59px;width:41px;height:21px;line-height:23px;">3.58</div>
<div class="lb" style="left:796px;top:86px;width:41px;height:21px;line-height:23px;">2.54</div>
<div class="lb" style="left:623px;top:130px;width:41px;height:21px;line-height:23px;">6.08</div>
<div class="lb" style="left:624px;top:150px;width:40px;height:21px;line-height:23px;">3.55</div>
<div class="lb" style="left:625px;top:166px;width:40px;height:20px;line-height:22px;">2.48</div>
<div class="lb" style="left:753px;top:158px;width:41px;height:21px;line-height:23px;">6.06</div>
<div class="lb" style="left:751px;top:182px;width:41px;height:21px;line-height:23px;">3.56</div>
<div class="lb" style="left:751px;top:203px;width:40px;height:21px;line-height:23px;">2.42</div>
<div class="lb" style="left:823px;top:162px;width:41px;height:21px;line-height:23px;">6.07</div>
<div class="lb" style="left:823px;top:178px;width:40px;height:21px;line-height:23px;">3.60</div>
<div class="lb" style="left:823px;top:206px;width:40px;height:21px;line-height:23px;">2.50</div>
<div class="lb" style="left:591px;top:309px;width:42px;height:21px;line-height:23px;">6.10</div>
<div class="lb" style="left:591px;top:329px;width:42px;height:21px;line-height:23px;">3.51</div>
<div class="lb" style="left:591px;top:346px;width:41px;height:20px;line-height:22px;">2.50</div>
<div class="lb" style="left:748px;top:346px;width:40px;height:21px;line-height:23px;">6.11</div>
<div class="lb" style="left:753px;top:371px;width:40px;height:21px;line-height:23px;">3.59</div>
<div class="lb" style="left:750px;top:395px;width:41px;height:21px;line-height:23px;">2.51</div>
<div class="lb" style="left:846px;top:344px;width:41px;height:21px;line-height:23px;">6.08</div>
<div class="lb" style="left:829px;top:363px;width:41px;height:21px;line-height:23px;">3.61</div>
<div class="lb" style="left:832px;top:395px;width:41px;height:21px;line-height:23px;">2.52</div>
<div class="lb" style="left:656px;top:490px;width:40px;height:21px;line-height:23px;">6.06</div>
<div class="lb" style="left:662px;top:510px;width:40px;height:21px;line-height:23px;">3.54</div>
<div class="lb" style="left:657px;top:529px;width:40px;height:20px;line-height:22px;">2.49</div>
<div class="lb" style="left:744px;top:566px;width:41px;height:22px;line-height:24px;">6.06</div>
<div class="lb" style="left:748px;top:592px;width:41px;height:21px;line-height:23px;">3.58</div>
<div class="lb" style="left:751px;top:610px;width:41px;height:21px;line-height:23px;">2.52</div>
<div class="lb" style="left:832px;top:580px;width:41px;height:21px;line-height:23px;">6.03</div>
<div class="lb" style="left:835px;top:618px;width:40px;height:21px;line-height:23px;">2.52</div>
<div class="lb" style="left:833px;top:605px;width:40px;height:21px;line-height:23px;">3.61</div>
<div class="lb" style="left:568px;top:664px;width:49px;height:21px;line-height:23px;">47.65</div>
<div class="lb" style="left:964px;top:732px;width:41px;height:22px;line-height:24px;">2.23</div>
<div class="lb" style="left:991px;top:783px;width:41px;height:22px;line-height:24px;">0.99</div>
<svg style="left:0;top:0" width="1094" height="796"><path d="M204 32L845 5" stroke="#8C8C8C" stroke-width="1" stroke-dasharray="3 3"/><path d="M480 30.5H845" stroke="#8C8C8C" stroke-width="1" stroke-dasharray="3 3"/><path d="M192 55.5H378" stroke="#8C8C8C" stroke-width="1" stroke-dasharray="3 3"/><path d="M404 55.5H694" stroke="#8C8C8C" stroke-width="1" stroke-dasharray="3 3"/><path d="M595 50.5H807" stroke="#8C8C8C" stroke-width="1" stroke-dasharray="3 3"/><path d="M547 64.5H894" stroke="#8C8C8C" stroke-width="1" stroke-dasharray="3 3"/><path d="M107 70.5H344" stroke="#8C8C8C" stroke-width="1" stroke-dasharray="3 3"/><path d="M404 77.5H797" stroke="#8C8C8C" stroke-width="1" stroke-dasharray="3 3"/><path d="M107 90.5H616" stroke="#8C8C8C" stroke-width="1" stroke-dasharray="3 3"/><path d="M272 105.5H289" stroke="#8C8C8C" stroke-width="1" stroke-dasharray="3 3"/><path d="M535 110.5H877" stroke="#8C8C8C" stroke-width="1" stroke-dasharray="3 3"/><path d="M200 121.5H595" stroke="#8C8C8C" stroke-width="1" stroke-dasharray="3 3"/><path d="M230 148.5H344" stroke="#8C8C8C" stroke-width="1" stroke-dasharray="3 3"/><path d="M230 165.5H735" stroke="#8C8C8C" stroke-width="2" stroke-dasharray="3 3"/><path d="M735 166.5H861" stroke="#8C8C8C" stroke-width="1"/><path d="M192 208.5H514" stroke="#8C8C8C" stroke-width="1" stroke-dasharray="3 3"/><path d="M697 209.5H732" stroke="#8C8C8C" stroke-width="1" stroke-dasharray="3 3"/><path d="M302 238.5H391" stroke="#8C8C8C" stroke-width="1" stroke-dasharray="3 3"/><path d="M199 268.5H671" stroke="#8C8C8C" stroke-width="1" stroke-dasharray="3 3"/><path d="M209 281.5H595" stroke="#8C8C8C" stroke-width="2" stroke-dasharray="3 3"/><path d="M264 298.5H728" stroke="#8C8C8C" stroke-width="1" stroke-dasharray="3 3"/><path d="M247 336.5H342" stroke="#8C8C8C" stroke-width="1" stroke-dasharray="3 3"/><path d="M192 352.5H887" stroke="#8C8C8C" stroke-width="1" stroke-dasharray="3 3"/><path d="M319 383.5H862" stroke="#8C8C8C" stroke-width="1" stroke-dasharray="3 3"/><path d="M319 386.5H862" stroke="#8C8C8C" stroke-width="1" stroke-dasharray="3 3"/><path d="M547 389.5H759" stroke="#8C8C8C" stroke-width="1" stroke-dasharray="3 3"/><path d="M192 399.5H353" stroke="#8C8C8C" stroke-width="1" stroke-dasharray="3 3"/><path d="M667 399.5H737" stroke="#8C8C8C" stroke-width="1" stroke-dasharray="3 3"/><path d="M336 447.5H609" stroke="#8C8C8C" stroke-width="1" stroke-dasharray="3 3"/><path d="M244 459.5H300" stroke="#8C8C8C" stroke-width="1" stroke-dasharray="3 3"/><path d="M340 466.5H552" stroke="#8C8C8C" stroke-width="1" stroke-dasharray="3 3"/><path d="M547 472.5H892" stroke="#8C8C8C" stroke-width="1" stroke-dasharray="3 3"/><path d="M220 509.5H336" stroke="#8C8C8C" stroke-width="1" stroke-dasharray="3 3"/><path d="M392 515.5H647" stroke="#8C8C8C" stroke-width="1" stroke-dasharray="3 3"/><path d="M698 516.5H892" stroke="#8C8C8C" stroke-width="1" stroke-dasharray="3 3"/><path d="M392 540.5H647" stroke="#8C8C8C" stroke-width="1" stroke-dasharray="3 3"/><path d="M698 522.5H892" stroke="#8C8C8C" stroke-width="1" stroke-dasharray="3 3"/><path d="M297 569.5H862" stroke="#8C8C8C" stroke-width="1" stroke-dasharray="3 3"/><path d="M284 606.5H552" stroke="#8C8C8C" stroke-width="1" stroke-dasharray="3 3"/><path d="M547 608.5H839" stroke="#8C8C8C" stroke-width="1" stroke-dasharray="3 3"/><path d="M424 620.5H552" stroke="#8C8C8C" stroke-width="1" stroke-dasharray="3 3"/><path d="M547 621.5H737" stroke="#8C8C8C" stroke-width="1" stroke-dasharray="3 3"/><path d="M4 695.5H862" stroke="#8C8C8C" stroke-width="1" stroke-dasharray="3 3"/><path d="M4 718.5H362" stroke="#8C8C8C" stroke-width="1" stroke-dasharray="3 3"/><path d="M617 719.5H863" stroke="#8C8C8C" stroke-width="1" stroke-dasharray="3 3"/><path d="M894 743.5H996" stroke="#8C8C8C" stroke-width="1" stroke-dasharray="3 3"/><path d="M894 746.5H996" stroke="#8C8C8C" stroke-width="1" stroke-dasharray="3 3"/><path d="M894 749.5H996" stroke="#8C8C8C" stroke-width="1"/><path d="M112.5 70V121" stroke="#8C8C8C" stroke-width="1" stroke-dasharray="3 3"/><path d="M182.5 55V349" stroke="#8C8C8C" stroke-width="1" stroke-dasharray="3 3"/><path d="M230.5 70V148" stroke="#8C8C8C" stroke-width="1" stroke-dasharray="3 3"/><path d="M230.5 165V588" stroke="#8C8C8C" stroke-width="1" stroke-dasharray="3 3"/><path d="M242.5 462V507" stroke="#8C8C8C" stroke-width="1"/><path d="M242.5 507V561" stroke="#8C8C8C" stroke-width="1" stroke-dasharray="3 3"/><path d="M249.5 70V508" stroke="#8C8C8C" stroke-width="1" stroke-dasharray="3 3"/><path d="M269.5 460V511" stroke="#8C8C8C" stroke-width="1"/><path d="M264.5 268V448" stroke="#8C8C8C" stroke-width="1" stroke-dasharray="3 3"/><path d="M304.5 298V481" stroke="#8C8C8C" stroke-width="1" stroke-dasharray="3 3"/><path d="M303.5 492V597" stroke="#8C8C8C" stroke-width="1" stroke-dasharray="3 3"/><path d="M343.5 258V508" stroke="#8C8C8C" stroke-width="1" stroke-dasharray="3 3"/><path d="M346.5 0V508" stroke="#8C8C8C" stroke-width="1"/><path d="M350.5 238V508" stroke="#8C8C8C" stroke-width="1" stroke-dasharray="3 3"/><path d="M367.5 238V674" stroke="#8C8C8C" stroke-width="1" stroke-dasharray="3 3"/><path d="M390.5 238V674" stroke="#8C8C8C" stroke-width="1" stroke-dasharray="3 3"/><path d="M393.5 508V674" stroke="#8C8C8C" stroke-width="1" stroke-dasharray="3 3"/><path d="M390.5 719V756" stroke="#8C8C8C" stroke-width="1"/><path d="M462.5 297V670" stroke="#8C8C8C" stroke-width="1" stroke-dasharray="3 3"/><path d="M481.5 30V508" stroke="#8C8C8C" stroke-width="1" stroke-dasharray="3 3"/><path d="M482.5 508V633" stroke="#8C8C8C" stroke-width="1" stroke-dasharray="3 3"/><path d="M515.5 208V503" stroke="#8C8C8C" stroke-width="1" stroke-dasharray="3 3"/><path d="M536.5 63V636" stroke="#8C8C8C" stroke-width="1" stroke-dasharray="3 3"/><path d="M572.5 30V662" stroke="#8C8C8C" stroke-width="1"/><path d="M595.5 268V485" stroke="#8C8C8C" stroke-width="1"/><path d="M611.5 90V720" stroke="#8C8C8C" stroke-width="1" stroke-dasharray="3 3"/><path d="M627.5 204V278" stroke="#8C8C8C" stroke-width="1" stroke-dasharray="3 3"/><path d="M671.5 148V268" stroke="#8C8C8C" stroke-width="1" stroke-dasharray="3 3"/><path d="M694.5 55V548" stroke="#8C8C8C" stroke-width="1" stroke-dasharray="3 3"/><path d="M724.5 184V621" stroke="#8C8C8C" stroke-width="1" stroke-dasharray="3 3"/><path d="M728.5 298V675" stroke="#8C8C8C" stroke-width="1" stroke-dasharray="3 3"/><path d="M737.5 386V621" stroke="#8C8C8C" stroke-width="1" stroke-dasharray="3 3"/><path d="M796.5 386V691" stroke="#8C8C8C" stroke-width="1" stroke-dasharray="3 3"/><path d="M825.5 386V691" stroke="#8C8C8C" stroke-width="1" stroke-dasharray="3 3"/><path d="M845.5 6V30" stroke="#8C8C8C" stroke-width="1" stroke-dasharray="3 3"/><path d="M862.5 354V695" stroke="#8C8C8C" stroke-width="1" stroke-dasharray="3 3"/><path d="M4.5 548V718" stroke="#8C8C8C" stroke-width="1" stroke-dasharray="3 3"/><path d="M996.5 749V796" stroke="#8C8C8C" stroke-width="1" stroke-dasharray="3 3"/><path d="M162 353L345 70" stroke="#8C8C8C" stroke-width="1" stroke-dasharray="3 3"/><path d="M339 622L845 43" stroke="#8C8C8C" stroke-width="1" stroke-dasharray="3 3"/><path d="M440 631L747 175" stroke="#8C8C8C" stroke-width="1" stroke-dasharray="3 3"/><path d="M737 168L757 186" stroke="#8C8C8C" stroke-width="1" stroke-dasharray="3 3"/><path d="M861 166L842 190" stroke="#8C8C8C" stroke-width="1" stroke-dasharray="3 3"/><path d="M351 506L369 492" stroke="#8C8C8C" stroke-width="1" stroke-dasharray="3 3"/><path d="M351 515L369 530" stroke="#8C8C8C" stroke-width="1" stroke-dasharray="3 3"/><path d="M346.5 0V70" stroke="#E00000" stroke-width="1"/><path d="M288.5 38V83" stroke="#E00000" stroke-width="1"/><path d="M352 73L697 508" stroke="#E00000" stroke-width="1"/><path d="M346 70.5H840" stroke="#E00000" stroke-width="1"/><path d="M846 30.5H895" stroke="#E00000" stroke-width="1"/><path d="M807 50.5H845" stroke="#E00000" stroke-width="1"/><path d="M903.5 34V74" stroke="#E00000" stroke-width="1"/><path d="M591.5 0V297" stroke="#E00000" stroke-width="1"/><path d="M595.5 32V121" stroke="#E00000" stroke-width="1"/><path d="M587 121.5H595" stroke="#E00000" stroke-width="1"/><path d="M735.5 165V386" stroke="#E00000" stroke-width="1"/><path d="M595.5 485V603" stroke="#E00000" stroke-width="1"/><path d="M595.5 665V727" stroke="#E00000" stroke-width="1"/><path d="M595.5 604V665" stroke="#8C8C8C" stroke-width="1" stroke-dasharray="3 3"/><path d="M902.5 485V726" stroke="#E00000" stroke-width="1"/><path d="M490.5 600V796" stroke="#E00000" stroke-width="1"/><path d="M371.5 600V796" stroke="#E00000" stroke-width="1"/><path d="M288.5 492V700" stroke="#E00000" stroke-width="1"/><path d="M380 719.5H591" stroke="#E00000" stroke-width="1"/><path d="M302 756.5H802" stroke="#E00000" stroke-width="1"/><path d="M877 110.5H894" stroke="#E00000" stroke-width="1"/><path d="M882 472.5H894" stroke="#E00000" stroke-width="1"/><path d="M882 522.5H894" stroke="#E00000" stroke-width="1"/><path d="M289 105.5H302" stroke="#E00000" stroke-width="1"/><path d="M845 33L840 49" stroke="#E00000" stroke-width="1"/><path d="M519 291L537 276" stroke="#E00000" stroke-width="1"/><path d="M522 278L535 308" stroke="#E00000" stroke-width="1"/><circle cx="346" cy="70" r="10" fill="none" stroke="#E00000" stroke-width="1"/><circle cx="350" cy="148" r="8" fill="none" stroke="#E00000" stroke-width="1"/><circle cx="671" cy="148" r="8" fill="none" stroke="#E00000" stroke-width="1"/><circle cx="735" cy="166" r="9" fill="none" stroke="#E00000" stroke-width="1"/><circle cx="861" cy="166" r="9" fill="none" stroke="#E00000" stroke-width="1"/><circle cx="837" cy="71" r="8" fill="none" stroke="#E00000" stroke-width="1"/><circle cx="614" cy="92" r="4" fill="none" stroke="#E00000" stroke-width="1"/><circle cx="724" cy="184" r="4" fill="none" stroke="#E00000" stroke-width="1"/><circle cx="350" cy="336" r="8" fill="none" stroke="#E00000" stroke-width="1"/><circle cx="733" cy="386" r="9" fill="none" stroke="#E00000" stroke-width="1"/><circle cx="861" cy="386" r="8" fill="none" stroke="#E00000" stroke-width="1"/><circle cx="343" cy="509" r="8" fill="none" stroke="#E00000" stroke-width="1"/><circle cx="520" cy="511" r="7" fill="none" stroke="#E00000" stroke-width="1"/><circle cx="693" cy="508" r="6" fill="none" stroke="#E00000" stroke-width="1"/><circle cx="735" cy="606" r="9" fill="none" stroke="#E00000" stroke-width="1"/><circle cx="862" cy="603" r="7" fill="none" stroke="#E00000" stroke-width="1"/><circle cx="462" cy="675" r="5" fill="none" stroke="#E00000" stroke-width="1"/><circle cx="727" cy="675" r="5" fill="none" stroke="#E00000" stroke-width="1"/><circle cx="862" cy="696" r="4" fill="none" stroke="#E00000" stroke-width="1"/><circle cx="609" cy="719" r="9" fill="none" stroke="#E00000" stroke-width="1"/><circle cx="371" cy="719" r="10" fill="none" stroke="#E00000" stroke-width="1"/><circle cx="371" cy="719" r="6" fill="none" stroke="#E00000" stroke-width="1"/><ellipse cx="346" cy="70" rx="7" ry="5" fill="#8A8A8A"/><ellipse cx="350" cy="148" rx="7" ry="5" fill="#8A8A8A"/><ellipse cx="671" cy="148" rx="7" ry="5" fill="#8A8A8A"/><ellipse cx="735" cy="166" rx="7" ry="5" fill="#8A8A8A"/><ellipse cx="861" cy="166" rx="7" ry="5" fill="#8A8A8A"/><ellipse cx="837" cy="71" rx="7" ry="5" fill="#8A8A8A"/><ellipse cx="350" cy="336" rx="7" ry="5" fill="#8A8A8A"/><ellipse cx="733" cy="386" rx="7" ry="5" fill="#8A8A8A"/><ellipse cx="861" cy="386" rx="7" ry="5" fill="#8A8A8A"/><ellipse cx="343" cy="509" rx="7" ry="5" fill="#8A8A8A"/><ellipse cx="735" cy="606" rx="7" ry="5" fill="#8A8A8A"/><ellipse cx="520" cy="511" rx="7" ry="5" fill="#8A8A8A"/><ellipse cx="693" cy="508" rx="7" ry="5" fill="#8A8A8A"/><ellipse cx="612" cy="340" rx="7" ry="5" fill="#8A8A8A"/><path d="M350 27L360 23.5L360 30.5Z" fill="#8A8A8A"/><path d="M352 36L348.5 46L355.5 46Z" fill="#8A8A8A"/><path d="M351 56L361 52.5L361 59.5Z" fill="#8A8A8A"/><path d="M537 65L533.5 75L540.5 75Z" fill="#8A8A8A"/><path d="M537 106L533.5 96L540.5 96Z" fill="#8A8A8A"/><path d="M481 30L477.5 40L481 50L484.5 40Z" fill="#8A8A8A"/><path d="M112 70L108.5 80L112 90L115.5 80Z" fill="#8A8A8A"/><path d="M183 97L179.5 87L186.5 87Z" fill="#8A8A8A"/><path d="M229 73L225.5 83L232.5 83Z" fill="#8A8A8A"/><path d="M229 144L225.5 134L232.5 134Z" fill="#8A8A8A"/><path d="M250 68L246.5 78L250 88L253.5 78Z" fill="#8A8A8A"/><path d="M350 120L360 116.5L360 123.5Z" fill="#8A8A8A"/><path d="M230 168L226.5 178L233.5 178Z" fill="#8A8A8A"/><path d="M304 166L300.5 176L307.5 176Z" fill="#8A8A8A"/><path d="M350 207L360 203.5L360 210.5Z" fill="#8A8A8A"/><path d="M501 209L511 205.5L511 212.5Z" fill="#8A8A8A"/><path d="M367 238L377 234.5L387 238L377 241.5Z" fill="#8A8A8A"/><path d="M842 6L832 2.5L832 9.5Z" fill="#8A8A8A"/><path d="M840 40L836.5 50L843.5 50Z" fill="#8A8A8A"/><path d="M571 36L567.5 46L574.5 46Z" fill="#8A8A8A"/><path d="M621 55L617.5 65L624.5 65Z" fill="#8A8A8A"/><path d="M681 56L691 52.5L691 59.5Z" fill="#8A8A8A"/><path d="M590 121L580 117.5L580 124.5Z" fill="#8A8A8A"/><path d="M571 164L567.5 154L574.5 154Z" fill="#8A8A8A"/><path d="M623 204L613 200.5L613 207.5Z" fill="#8A8A8A"/><path d="M667 266L657 262.5L657 269.5Z" fill="#8A8A8A"/><path d="M348 268L358 264.5L358 271.5Z" fill="#8A8A8A"/><path d="M348 281L358 277.5L358 284.5Z" fill="#8A8A8A"/><path d="M465 298L475 294.5L475 301.5Z" fill="#8A8A8A"/><path d="M247 332L243.5 322L250.5 322Z" fill="#8A8A8A"/><path d="M303 381L299.5 371L306.5 371Z" fill="#8A8A8A"/><path d="M345 352L355 348.5L355 355.5Z" fill="#8A8A8A"/><path d="M345 399L355 395.5L355 402.5Z" fill="#8A8A8A"/><path d="M242 466L238.5 476L245.5 476Z" fill="#8A8A8A"/><path d="M242 507L238.5 497L245.5 497Z" fill="#8A8A8A"/><path d="M250 507L246.5 497L253.5 497Z" fill="#8A8A8A"/><path d="M267 463L263.5 473L270.5 473Z" fill="#8A8A8A"/><path d="M269 510L265.5 500L272.5 500Z" fill="#8A8A8A"/><path d="M372 540L382 536.5L382 543.5Z" fill="#8A8A8A"/><path d="M669 268L659 264.5L659 271.5Z" fill="#8A8A8A"/><path d="M580 282L590 278.5L590 285.5Z" fill="#8A8A8A"/><path d="M580 298L590 294.5L590 301.5Z" fill="#8A8A8A"/><path d="M727 298L717 294.5L717 301.5Z" fill="#8A8A8A"/><path d="M608 389L598 385.5L598 392.5Z" fill="#8A8A8A"/><path d="M737 354L747 350.5L747 357.5Z" fill="#8A8A8A"/><path d="M812 384L802 380.5L802 387.5Z" fill="#8A8A8A"/><path d="M825 384L815 380.5L815 387.5Z" fill="#8A8A8A"/><path d="M847 354L857 350.5L857 357.5Z" fill="#8A8A8A"/><path d="M607 447L597 443.5L597 450.5Z" fill="#8A8A8A"/><path d="M607 540L597 536.5L597 543.5Z" fill="#8A8A8A"/><path d="M385 569L375 565.5L375 572.5Z" fill="#8A8A8A"/><path d="M4 695L0.5 705L4 715L7.5 705Z" fill="#8A8A8A"/><path d="M394 722L390.5 732L397.5 732Z" fill="#8A8A8A"/><path d="M394 753L390.5 743L397.5 743Z" fill="#8A8A8A"/><path d="M847 570L857 566.5L857 573.5Z" fill="#8A8A8A"/><path d="M724 621L734 617.5L734 624.5Z" fill="#8A8A8A"/><path d="M996 736L992.5 726L999.5 726Z" fill="#8A8A8A"/><path d="M996 760L992.5 770L999.5 770Z" fill="#8A8A8A"/><path d="M262 738L258.5 748L262 758L265.5 748Z" fill="#8A8A8A"/><rect x="899.5" y="658.5" width="27" height="21" fill="none" stroke="#8C8C8C" stroke-width="2"/><path d="M198 718V680M198 718H235" stroke="#19E01A" stroke-width="2"/><path d="M194 686L198 677L202 686ZM231 714L240 718L231 722Z" fill="#19E01A"/></svg>
</div>
<div class="a" style="left:1587px;top:192px;width:6px;height:796px;background:#BFDBFE"></div>
<div class="a" style="left:1593px;top:145px;width:327px;height:845px;background:#BFDBFE"></div>
<div class="ph" style="left:1593px;top:145px;width:327px;height:18px;line-height:17px">光学</div>
<svg style="left:1889px;top:148px" width="9" height="10"><path d="M2 0.5H7M3 0.5V6M6 0.5V6M1 6H8M4.5 6V10" stroke="#3A5F95" stroke-width="1.3" fill="none"/></svg><svg style="left:1906px;top:149px" width="9" height="9"><path d="M0.5 0.5L8.5 8.5M8.5 0.5L0.5 8.5" stroke="#3A5F95" stroke-width="1.4"/></svg>
<div class="a" style="left:1607px;top:256px;width:300px;height:225px;background:#fff"></div>
<div class="a" style="left:1593px;top:918px;width:327px;height:72px;background:#D1E1F3"></div>
<div class="a" style="left:1606px;top:574px;width:301px;height:344px;background:#F0F0F0"></div>
<svg style="left:1607px;top:574px" width="280" height="280"><defs><pattern id="hx" width="8" height="8" patternUnits="userSpaceOnUse" x="1" y="1"><rect width="8" height="8" fill="#6B6400"/><path d="M0 0L8 8M8 0L0 8" stroke="#FF1000" stroke-width="0.75"/></pattern></defs><rect x="1" y="1" width="279" height="278" fill="url(#hx)" stroke="#111" stroke-width="2"/><circle cx="140" cy="140" r="138" fill="#6B6400" stroke="#222" stroke-width="2.5"/><circle cx="140" cy="140" r="120" fill="none" stroke="#222" stroke-width="2.5"/><circle cx="140" cy="140" r="99" fill="none" stroke="#222" stroke-width="2.5"/><circle cx="140" cy="140" r="79" fill="none" stroke="#222" stroke-width="2.5"/><circle cx="140" cy="140" r="59" fill="none" stroke="#222" stroke-width="2.5"/><circle cx="140" cy="140" r="39" fill="none" stroke="#222" stroke-width="2.5"/><circle cx="140" cy="140" r="19" fill="#0A0A00" stroke="#222" stroke-width="2"/><path d="M147.3 122.4L192.8 12.5M157.6 132.7L267.5 87.2M157.6 147.3L267.5 192.8M147.3 157.6L192.8 267.5M132.7 157.6L87.2 267.5M122.4 147.3L12.5 192.8M122.4 132.7L12.5 87.2M132.7 122.4L87.2 12.5" stroke="#222" stroke-width="2.5"/></svg>
<div class="a" style="left:1887px;top:590px;width:19px;height:218px;background:#808080"></div>
<div class="a" style="left:1887px;top:808px;width:19px;height:17px;background:#CDCDCD"></div>
<div class="a" style="left:1887px;top:825px;width:19px;height:11px;background:#8A8A8A"></div>
<div class="a" style="left:1607px;top:855px;width:34px;height:34px;background:#fff;border:1px solid #B8B8B8"></div><svg style="left:1608px;top:856px" width="32" height="32"><circle cx="16" cy="16" r="14" fill="#FFF200" stroke="#776" stroke-width="0.8"/><circle cx="16" cy="16" r="4" fill="#fff" stroke="#776"/></svg>
<div class="a" style="left:1645px;top:855px;width:34px;height:34px;background:#fff;border:1px solid #B8B8B8"></div><svg style="left:1646px;top:856px" width="32" height="32"><circle cx="16" cy="16" r="14" fill="#fff" stroke="#665" stroke-width="1"/><circle cx="16" cy="16" r="8" fill="#FFF200" stroke="#665"/><circle cx="16" cy="16" r="3.5" fill="#fff" stroke="#665"/></svg>
<div class="a" style="left:1683px;top:855px;width:34px;height:34px;background:#fff;border:1px solid #B8B8B8"></div><svg style="left:1684px;top:856px" width="32" height="32"><circle cx="16" cy="16" r="14" fill="#fff" stroke="#665"/><path d="M16 16L2 16A14 14 0 0 0 6 26Z" fill="#FFF200"/><circle cx="16" cy="16" r="3" fill="#fff" stroke="#665"/><path d="M16 2V13M16 19V30M2 16H13M19 16H30M6 6L14 14M26 6L18 14M6 26L14 18M26 26L18 18" stroke="#665"/></svg>
<div class="a" style="left:1721px;top:855px;width:34px;height:34px;background:#fff;border:1px solid #B8B8B8"></div><svg style="left:1722px;top:856px" width="32" height="32"><circle cx="16" cy="16" r="14" fill="#fff" stroke="#665"/><path d="M16 16L2 16A14 14 0 0 0 6 26Z" fill="#FFF200"/><circle cx="16" cy="16" r="9" fill="none" stroke="#665"/><circle cx="16" cy="16" r="4" fill="#fff" stroke="#665"/><path d="M16 2V12M16 20V30M2 16H12M20 16H30M6 6L13 13M26 6L19 13M6 26L13 19M26 26L19 19" stroke="#665"/></svg>
<div class="a" style="left:1762px;top:855px;width:60px;height:35px;background:#fff"></div>
<div class="a" style="left:1762px;top:872px;width:28px;height:13px;background:#F2F2F2"></div>
<div class="t" style="left:1762px;top:855px;font-size:12px">轮廓光</div>
<div class="t" style="left:1762px;top:873px;font-size:12px">5.0%</div>
<div class="a" style="left:1873px;top:855px;width:34px;height:33px;background:#E1E1E1;border:1px solid #ADADAD;font-size:11px;line-height:31px;text-align:center">OFF</div>
<div class="a" style="left:1607px;top:893px;width:34px;height:26px;background:#D6D6D6;border:1px solid #C4C4C4"></div>
<div class="a" style="left:1645px;top:893px;width:34px;height:26px;background:#D6D6D6;border:1px solid #C4C4C4"></div>
<svg style="left:1615px;top:897px" width="18" height="18"><path d="M4 4A7 7 0 1 1 3 12" fill="none" stroke="#E6DC7A" stroke-width="3"/><path d="M1 2L7 2L4 7Z" fill="#E6DC7A"/></svg>
<svg style="left:1653px;top:897px" width="18" height="18"><path d="M14 4A7 7 0 1 0 15 12" fill="none" stroke="#E6DC7A" stroke-width="3"/><path d="M17 2L11 2L14 7Z" fill="#E6DC7A"/></svg>
<div class="a" style="left:1592px;top:382px;width:196px;height:193px;background:#F0F0F0;border:1px solid #19A7B8;box-shadow:2px 2px 6px rgba(0,0,0,0.25)"></div>
<div class="a" style="left:1592px;top:382px;width:196px;height:30px;background:#01B7C5"></div>
<div class="t" style="left:1600px;top:391px;font-size:12px">控制台</div>
<svg style="left:1766px;top:391px" width="12" height="12"><path d="M0.5 0.5L11.5 11.5M11.5 0.5L0.5 11.5" stroke="#111" stroke-width="1.2"/></svg>
<div class="a" style="left:1636px;top:419px;width:47px;height:48px;background:#F0F0F0;border:1px solid #fff;border-right:1px solid #A0A0A0;border-bottom:1px solid #A0A0A0"></div><svg style="left:1636px;top:419px" width="46" height="46"><path d="M4 37.5L13.3 26.4H41.8L32.6 37.5Z" fill="#80FFFF" stroke="#222" stroke-width="0.8"/><path d="M24.5 9L34.6 18.2H29.6V28.4H19.4V18.2H14.3Z" fill="#007A00"/></svg>
<div class="a" style="left:1683px;top:419px;width:47px;height:48px;background:#F0F0F0;border:1px solid #fff;border-right:1px solid #A0A0A0;border-bottom:1px solid #A0A0A0"></div><svg style="left:1683px;top:419px" width="46" height="46"><path d="M23 9L37 23H29.5V37.5H16.5V23H9Z" fill="#007A00"/></svg>
<div class="a" style="left:1731px;top:419px;width:47px;height:48px;background:#F0F0F0;border:1px solid #fff;border-right:1px solid #A0A0A0;border-bottom:1px solid #A0A0A0"></div><svg style="left:1731px;top:419px" width="46" height="46"><path d="M18 10H26V21.3H38.5V28.4H26V40.6H18V28.4H6.9V21.3H18Z" fill="#007A00"/></svg>
<div class="a" style="left:1636px;top:467px;width:47px;height:48px;background:#F0F0F0;border:1px solid #fff;border-right:1px solid #A0A0A0;border-bottom:1px solid #A0A0A0"></div><svg style="left:1636px;top:467px" width="46" height="46"><path d="M8 24L22.5 10V16H36.5V31.5H22.5V38.5Z" fill="#007A00"/></svg>
<div class="a" style="left:1683px;top:467px;width:47px;height:48px;background:#F0F0F0;border:1px solid #fff;border-right:1px solid #A0A0A0;border-bottom:1px solid #A0A0A0"></div><svg style="left:1683px;top:467px" width="46" height="46"><ellipse cx="8.6" cy="26.9" rx="2.5" ry="8.5" fill="#00B0F0" stroke="#3CB03C" stroke-width="0.8"/><ellipse cx="17.6" cy="24.6" rx="3.3" ry="11" fill="#00B0F0" stroke="#3CB03C" stroke-width="0.8"/></svg>
<div class="a" style="left:1731px;top:467px;width:47px;height:48px;background:#F0F0F0;border:1px solid #fff;border-right:1px solid #A0A0A0;border-bottom:1px solid #A0A0A0"></div><svg style="left:1731px;top:467px" width="46" height="46"><path d="M37.5 24L23 10V16H9V31.5H23V38.5Z" fill="#007A00"/></svg>
<div class="a" style="left:1636px;top:515px;width:47px;height:48px;background:#F0F0F0;border:1px solid #fff;border-right:1px solid #A0A0A0;border-bottom:1px solid #A0A0A0"></div><svg style="left:1636px;top:515px" width="46" height="46"><path d="M4 22L13.3 10.8H42.8L33.6 22Z" fill="#80FFFF" stroke="#222" stroke-width="0.8"/><path d="M16.3 19H27.5V30.2H31.6L21.4 39.4L11.2 30.2H16.3Z" fill="#007A00"/></svg>
<div class="a" style="left:1683px;top:515px;width:47px;height:48px;background:#F0F0F0;border:1px solid #fff;border-right:1px solid #A0A0A0;border-bottom:1px solid #A0A0A0"></div><svg style="left:1683px;top:515px" width="46" height="46"><path d="M16.5 10H29.5V24H37L23 38L9 24H16.5Z" fill="#007A00"/></svg>
<div class="a" style="left:1731px;top:515px;width:47px;height:48px;background:#F0F0F0;border:1px solid #fff;border-right:1px solid #A0A0A0;border-bottom:1px solid #A0A0A0"></div><svg style="left:1731px;top:515px" width="46" height="46"><rect x="11" y="20" width="25.5" height="4.7" fill="#3A8A3A"/></svg>
<svg style="left:1598px;top:418px" width="28" height="28"><path d="M14 1L18 6H15.5V12.5H22V10L27 14L22 18V15.5H15.5V22H18L14 27L10 22H12.5V15.5H6V18L1 14L6 10V12.5H12.5V6H10Z" fill="#0A8A0A"/></svg>
<div class="a" style="left:1609px;top:452px;width:14px;height:24px;background:#000"></div><svg style="left:1609px;top:452px" width="14" height="24"><path d="M4 5H12M4 12H12M4 19H12" stroke="#2BE02B" stroke-width="2"/></svg>
<div class="t" style="left:1601px;top:452px;font-size:8px;line-height:8px;white-space:normal;width:6px">X<br>Y<br>Z</div>
<div class="a" style="left:39px;top:678px;width:409px;height:310px;overflow:hidden;background:#6F7672;border:1px solid #6A6A6A">
<svg style="left:-1px;top:-1px" width="409" height="310"><defs>
<filter id="b3" x="-20%" y="-20%" width="140%" height="140%"><feGaussianBlur stdDeviation="3"/></filter>
<filter id="b6" x="-30%" y="-30%" width="160%" height="160%"><feGaussianBlur stdDeviation="6"/></filter>
<filter id="b12" x="-50%" y="-50%" width="200%" height="200%"><feGaussianBlur stdDeviation="12"/></filter>
<radialGradient id="ell" cx="0.5" cy="0.6" r="0.55"><stop offset="0" stop-color="#8A938D"/><stop offset="0.6" stop-color="#6E7672"/><stop offset="1" stop-color="#5E6561"/></radialGradient>
<radialGradient id="glow" cx="0.5" cy="0.5" r="0.5"><stop offset="0" stop-color="#F4FFF2" stop-opacity="1"/><stop offset="0.4" stop-color="#D6EED3" stop-opacity="0.8"/><stop offset="0.7" stop-color="#A5BBA6" stop-opacity="0.4"/><stop offset="1" stop-color="#8A9A8C" stop-opacity="0"/></radialGradient>
</defs>
<g filter="url(#b3)">
<rect x="-10" y="-10" width="430" height="330" fill="#6F7672"/>
<rect x="-10" y="-10" width="126" height="41" fill="#6E7571"/>
<rect x="-10" y="22" width="82" height="100" fill="#858C88"/>
<rect x="45" y="31" width="71" height="30" fill="#A4ABA6"/>
<polygon points="-10,91 -10,118 57,148 69,136" fill="#A0A7A2"/>
<rect x="292" y="-10" width="126" height="47" fill="#6A716D"/>
<rect x="292" y="37" width="126" height="30" fill="#ABB2AD"/>
<rect x="331" y="67" width="87" height="54" fill="#8B928E"/>
<polygon points="72,59 331,59 331,320 72,320" fill="#565D59"/>
<rect x="116" y="-10" width="176" height="74" fill="#575E5A"/>
<polygon points="-10,121 57,150 72,150 72,320 -10,320" fill="#2E3230"/>
<polygon points="418,121 352,151 331,151 331,320 418,320" fill="#2D312F"/>
</g>
<g filter="url(#b6)">
<rect x="60" y="140" width="25" height="170" fill="#3E4442"/>
<rect x="318" y="140" width="25" height="170" fill="#3E4442"/>
<ellipse cx="199" cy="205" rx="118" ry="132" fill="url(#ell)"/>
</g>
<circle cx="203" cy="215" r="105" fill="url(#glow)" filter="url(#b6)"/>
<circle cx="202" cy="222" r="40" fill="#FFFFFF" filter="url(#b3)"/>
<g filter="url(#b3)" fill="#EAF5E8">
<circle cx="138" cy="186" r="5"/><circle cx="171" cy="274" r="5"/><circle cx="259" cy="235" r="5"/><circle cx="223" cy="151" r="4"/><circle cx="247" cy="210" r="2"/>
<ellipse cx="199" cy="91" rx="12" ry="5" fill="#B8CCB4"/>
</g>
<g fill="#F2F4F2">
<circle cx="158" cy="47" r="3"/>
<rect x="67" y="2" width="12" height="18" rx="3"/><rect x="359" y="2" width="11" height="21" rx="3"/>
<polygon points="382,300 400,292 404,309 380,309"/>
</g>
<rect x="191" y="163" width="41" height="2" fill="#19E019"/><rect x="210" y="144" width="2" height="41" fill="#19E019"/>
</svg></div>
<div class="a" style="left:487px;top:989px;width:1106px;height:22px;background:#BFDBFE"></div>
<div class="a" style="left:1593px;top:990px;width:327px;height:21px;background:#D1E1F3"></div>
<div class="a" style="left:535px;top:990px;width:35px;height:19px;background:linear-gradient(#F6FAFF,#DCE9F8);border:1px solid #9FC0E8;border-top:none;border-radius:0 0 3px 3px"></div>
<div class="t" style="left:497px;top:993px;font-size:12px;color:#15428B">影像</div>
<div class="t" style="left:539px;top:993px;font-size:12px;color:#15428B">图形</div>
<div class="a" style="left:0;top:1012px;width:1920px;height:28px;background:linear-gradient(#DDE9F8 0,#CBDCF2 45%,#BDD3EE 55%,#CFE0F5 100%);border-top:1px solid #5E86BE;box-shadow:inset 0 1px 0 #fff"></div>
<div class="t" style="left:9px;top:1019px;font-size:12px;color:#15428B">帮助，请按F1</div>
<div class="t" style="left:108px;top:1019px;font-size:12px;color:#15428B">十字线:『关』</div>
<div class="t" style="left:207px;top:1019px;font-size:12px;color:#15428B">对象捕获:『开启』</div>
<div class="t" style="left:336px;top:1019px;font-size:12px;color:#15428B">转至极坐标:[关]</div>
<div class="t" style="left:445px;top:1019px;font-size:12px;color:#15428B">角度:『度』</div>
<div class="t" style="left:557px;top:1019px;font-size:12px;color:#15428B">单位:『 mm 』</div>
<div class="t" style="left:649px;top:1019px;font-size:12px;color:#15428B">快速z软限位:『关闭』</div>
<div class="a" style="left:97px;top:1014px;width:1px;height:24px;background:#A8C0DE;border-right:1px solid #F0F6FD"></div>
<div class="a" style="left:326px;top:1014px;width:1px;height:24px;background:#A8C0DE;border-right:1px solid #F0F6FD"></div>
<div class="a" style="left:435px;top:1014px;width:1px;height:24px;background:#A8C0DE;border-right:1px solid #F0F6FD"></div>
<div class="a" style="left:638px;top:1014px;width:1px;height:24px;background:#A8C0DE;border-right:1px solid #F0F6FD"></div>
<div class="a" style="left:0;top:1040px;width:1920px;height:40px;background:#224B39"></div>
<div class="a" style="left:635px;top:1040px;width:48px;height:40px;background:#2E7C6E"></div><div class="a" style="left:635px;top:1078px;width:48px;height:2px;background:#9AD8E8"></div>
<svg style="left:15px;top:1051px" width="18" height="18"><path d="M0 2.5L7.5 1.5V8.5H0ZM8.5 1.3L18 0V8.5H8.5ZM0 9.5H7.5V16.5L0 15.5ZM8.5 9.5H18V18L8.5 16.7Z" fill="#fff"/></svg>
<svg style="left:63px;top:1051px" width="18" height="18"><circle cx="11" cy="7" r="5.5" fill="none" stroke="#fff" stroke-width="1.5"/><path d="M7 11L1 17" stroke="#fff" stroke-width="1.8"/></svg>
<svg style="left:110px;top:1050px" width="20" height="20"><circle cx="10" cy="10" r="8" fill="none" stroke="#fff" stroke-width="1.8"/></svg>
<svg style="left:158px;top:1051px" width="20" height="18"><rect x="1" y="4" width="11" height="9" fill="none" stroke="#fff" stroke-width="1.5"/><path d="M1 1H12M1 16H12M15 1V16M18 1V16" stroke="#fff" stroke-width="1.5"/></svg>
<svg style="left:207px;top:1049px" width="23" height="21"><path d="M0 3H9L11 5H23V21H0Z" fill="#E8B22E"/><rect x="0" y="8" width="23" height="13" fill="#F8D25A"/><rect x="6" y="13" width="11" height="5" fill="#2F7FD0"/></svg>
<svg style="left:256px;top:1049px" width="24" height="22"><ellipse cx="12" cy="9" rx="10" ry="7" fill="#E8E8E8" stroke="#C03030" stroke-width="1.6"/><path d="M6 10L18 20M18 10L6 20" stroke="#3A80D0" stroke-width="1.8"/></svg>
<div class="a" style="left:306px;top:1048px;width:22px;height:22px;background:#B40F0F;border-radius:2px"></div><svg style="left:306px;top:1048px" width="22" height="22"><path d="M5 17C8 12 10 7 10 4C10 2 12 2 12 4C12 8 14 12 18 14C14 14 9 15 5 17Z" fill="none" stroke="#fff" stroke-width="1.4"/></svg>
<svg style="left:352px;top:1047px" width="26" height="26"><path d="M3 6L14 2V20L3 24Z" fill="#1E90E0"/><path d="M14 2L23 5V22L14 20Z" fill="#AFC8D8"/><path d="M10 8V18" stroke="#000" stroke-width="3"/></svg>
<div class="a" style="left:402px;top:1047px;width:24px;height:25px;background:#F4D0D0"></div><div class="t" style="left:405px;top:1048px;font-size:22px;font-weight:bold;color:#D41A1A">D</div>
<div class="a" style="left:451px;top:1047px;width:24px;height:25px;background:#F6F0F0"></div><div class="t" style="left:454px;top:1048px;font-size:22px;font-weight:bold;color:#D41A1A">A</div>
<svg style="left:503px;top:1049px" width="18" height="23"><rect x="0" y="0" width="18" height="23" fill="#6A6F74"/><rect x="2" y="2" width="14" height="4" fill="#5BC0F0"/><path d="M2 9H6V12H2ZM7 9H11V12H7ZM12 9H16V12H12ZM2 14H6V17H2ZM7 14H11V17H7ZM12 14H16V21H12ZM2 18H6V21H2ZM7 18H11V21H7Z" fill="#E8EEF2"/></svg>
<svg style="left:549px;top:1048px" width="24" height="24"><defs><linearGradient id="eg" x1="0" y1="0" x2="1" y2="1"><stop offset="0" stop-color="#52D07A"/><stop offset="0.5" stop-color="#1FA0E0"/><stop offset="1" stop-color="#1050B0"/></linearGradient></defs><circle cx="12" cy="12" r="11" fill="url(#eg)"/><path d="M6 14C6 9 10 7 13 7C17 7 19 10 19 12H9C9 16 14 18 19 16C16 20 6 19 6 14Z" fill="#1F4A37" opacity="0.75"/></svg>
<div class="a" style="left:598px;top:1048px;width:24px;height:23px;background:#fff;border-bottom-right-radius:4px"></div><div class="t" style="left:599px;top:1052px;font-size:14px;font-weight:bold;color:#1A8FD0;letter-spacing:-0.8px">Me</div>
<div class="a" style="left:647px;top:1048px;width:24px;height:23px;background:#fff;border-bottom-right-radius:4px"></div><div class="t" style="left:648px;top:1052px;font-size:14px;font-weight:bold;color:#1A8FD0;letter-spacing:-0.8px">Me</div>
<svg style="left:1723px;top:1055px" width="12" height="8"><path d="M1 7L6 2L11 7" stroke="#fff" stroke-width="1.3" fill="none"/></svg>
<svg style="left:1744px;top:1052px" width="18" height="16"><path d="M1 5H4L8 1V15L4 11H1Z" fill="none" stroke="#fff" stroke-width="1.1"/><path d="M11 5A4 4 0 0 1 11 11M13 3A7 7 0 0 1 13 13" stroke="#fff" stroke-width="1.1" fill="none"/></svg>
<svg style="left:1769px;top:1051px" width="18" height="18"><circle cx="9" cy="9" r="7.5" fill="none" stroke="#fff" stroke-width="1.1"/><ellipse cx="9" cy="9" rx="3.5" ry="7.5" fill="none" stroke="#fff" stroke-width="1.1"/><path d="M1.5 9H16.5M3 5H15M3 13H15" stroke="#fff" stroke-width="1"/></svg>
<div class="t" style="left:1793px;top:1052px;font-size:15px;color:#fff">中</div>
<div class="t" style="left:1824px;top:1045px;font-size:12px;color:#fff">11:03</div>
<div class="t" style="left:1819px;top:1063px;font-size:12px;color:#fff">24.7.15</div>
<svg style="left:1879px;top:1051px" width="24" height="26"><path d="M1 1H17V12H7L3 16V12H1Z" fill="#fff"/><path d="M4 4H14M4 7H14" stroke="#1F4A37" stroke-width="1.2"/><circle cx="15.5" cy="16" r="6.5" fill="#1B7B78" stroke="#5AA8A8" stroke-width="1"/><text x="15.5" y="20" font-size="11" text-anchor="middle" fill="#fff" font-family="Liberation Sans" font-weight="bold">2</text></svg>
<div class="a" style="left:1914px;top:1040px;width:1px;height:40px;background:#6A8A7A"></div>
</body></html>
